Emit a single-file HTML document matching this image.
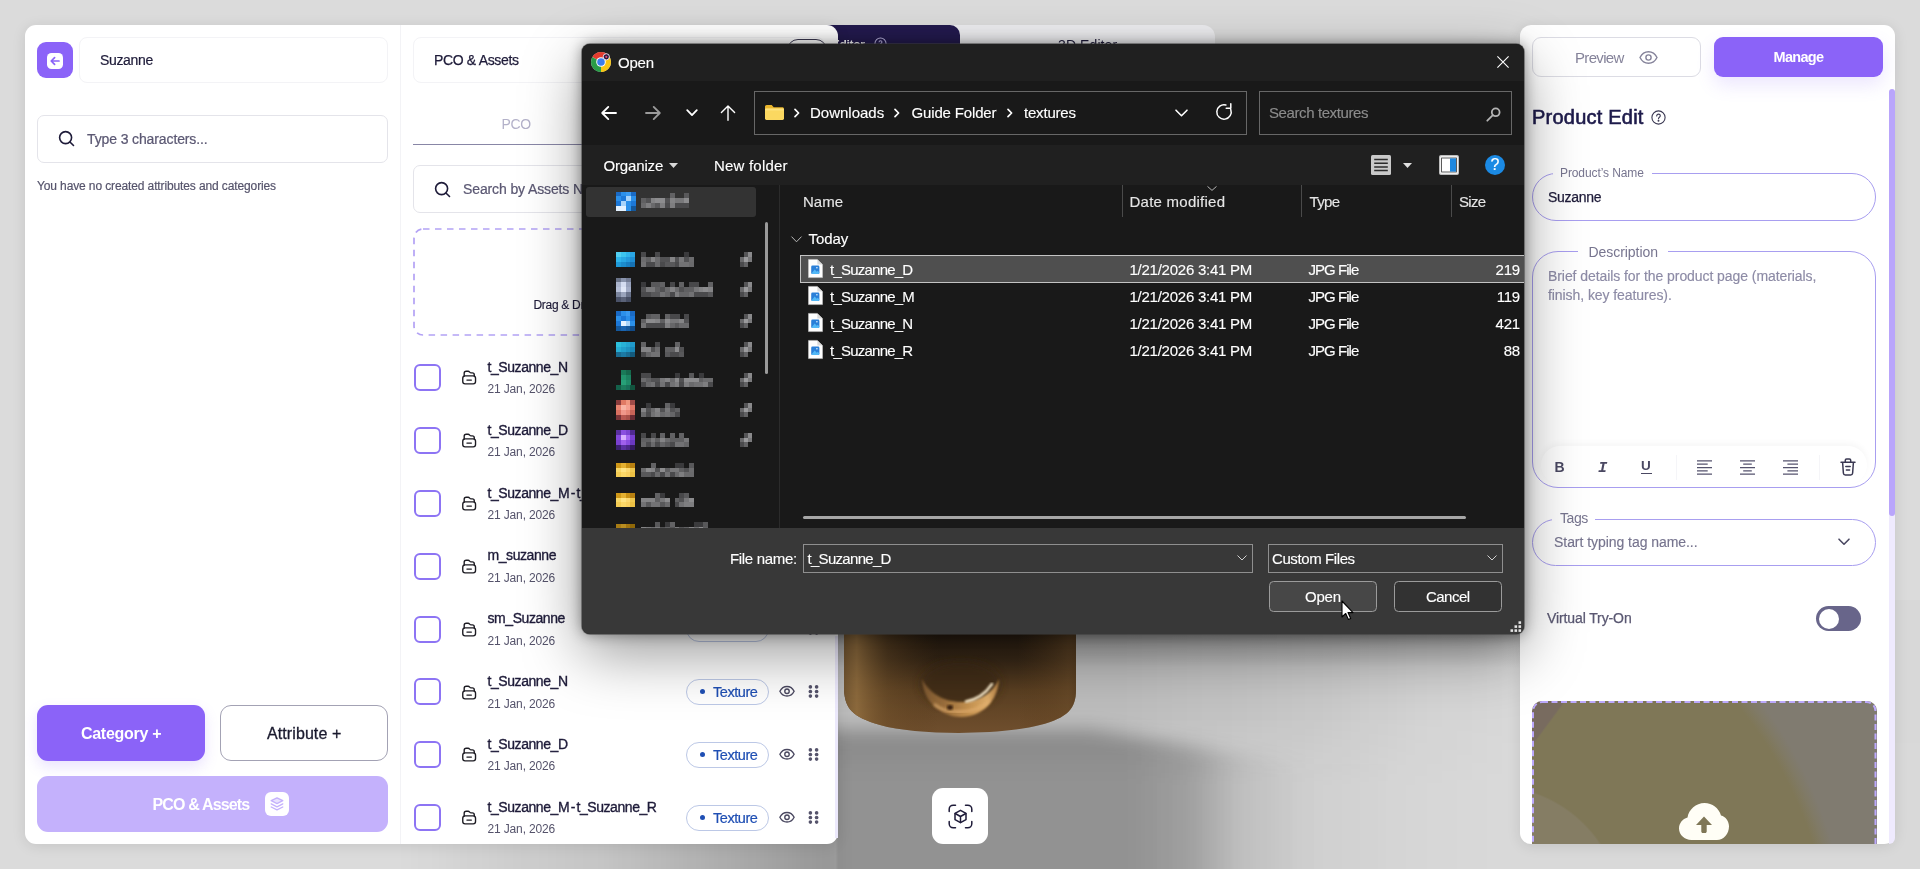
<!DOCTYPE html>
<html lang="en">
<head>
<meta charset="utf-8">
<title>Suzanne - Product Edit</title>
<style>
*{box-sizing:border-box;margin:0;padding:0}
html,body{width:1920px;height:869px;overflow:hidden}
body{position:relative;background:#dcdcdc;font-family:"Liberation Sans",Arial,sans-serif;color:#1e1b39}
.abs{position:absolute}
svg{display:block;overflow:visible}
/* ---------- viewport (3D canvas) ---------- */
#viewport{position:absolute;left:0;top:0;width:1920px;height:869px;overflow:hidden;background:#dbdbdb}
#band{position:absolute;left:0;top:600px;width:1920px;height:269px;
 background:linear-gradient(90deg,rgba(0,0,0,0) 836px,rgba(0,0,0,.135) 838px,rgba(0,0,0,.135) 1120px,rgba(0,0,0,.085) 1300px,rgba(0,0,0,.035) 1420px,rgba(0,0,0,.012) 1510px);
 -webkit-mask-image:linear-gradient(180deg,#000 0,#000 118px,rgba(0,0,0,.55) 185px,rgba(0,0,0,.55) 100%);mask-image:linear-gradient(180deg,#000 0,#000 118px,rgba(0,0,0,.55) 185px,rgba(0,0,0,.55) 100%)}
#under{position:absolute;left:838px;top:634px;width:682px;height:34px;background:linear-gradient(180deg,rgba(0,0,0,.2) 0,rgba(0,0,0,.1) 12px,rgba(0,0,0,0) 100%)}
/* ---------- left panel ---------- */
#left{position:absolute;left:25px;top:25px;width:813px;height:819px;background:#fff;border-radius:11px;
 box-shadow:0 2px 14px rgba(0,0,0,.10);overflow:hidden}
#right{position:absolute;left:1520px;top:25px;width:375px;height:819px;background:#fff;border-radius:11px;
 box-shadow:0 2px 14px rgba(0,0,0,.10);overflow:hidden}
/* ---------- dialog ---------- */
#dlg{position:absolute;left:582px;top:44px;width:942px;height:590px;background:#191919;border-radius:8px;
 box-shadow:0 0 0 1px rgba(60,60,60,.5),0 0 14px rgba(0,0,0,.42),0 20px 60px rgba(0,0,0,.40);overflow:hidden;
 color:#fff;font-size:15px}

/* ---------- left panel content ---------- */
.t{position:absolute;white-space:nowrap;line-height:1}
#back{position:absolute;left:37px;top:42px;width:36px;height:36px;border-radius:9px;background:#8b63f8}
#back i{position:absolute;left:10px;top:10.5px;width:16px;height:16px;border-radius:4.5px;background:#fff}
.box{position:absolute;border:1px solid #ececf0;border-radius:8px;background:#fff}
#cat{position:absolute;left:37px;top:705px;width:168px;height:56px;border-radius:11px;background:#8b63f8;box-shadow:0 6px 14px rgba(139,99,248,.18)}
#attr{position:absolute;left:220px;top:705px;width:168px;height:56px;border-radius:11px;background:#fff;border:1px solid #a3a2b4}
#pco{position:absolute;left:37px;top:776px;width:351px;height:56px;border-radius:11px;background:#c4b1fc}
#pco i{position:absolute;left:228px;top:16px;width:24px;height:24px;border-radius:6px;background:#fff}
.cb{position:absolute;left:414px;width:27px;height:27px;border:2px solid #8d74f4;border-radius:6px;background:#fff}
.fi{position:absolute;left:461.800px;width:14.300px;height:14.800px}
.nm{position:absolute;left:487.5px;font-size:14px;font-weight:400;color:#1e1b39;white-space:nowrap;line-height:1;letter-spacing:-.43px;-webkit-text-stroke:.35px #1e1b39}
.dt{position:absolute;left:487.5px;font-size:12px;color:#55536b;white-space:nowrap;line-height:1;letter-spacing:-.15px}
.pill{position:absolute;left:686px;width:83px;height:26px;border:1px solid #bcc8e6;border-radius:13px;background:#fff;color:#1f4fb4;font-size:14.5px;line-height:24px;padding-left:26px;letter-spacing:-.44px;-webkit-text-stroke:.2px #1f4fb4}
.pill:before{content:"";position:absolute;left:12.5px;top:9.5px;width:5px;height:5px;border-radius:50%;background:#1f4fb4}
.eye{position:absolute;left:779px;width:16px;height:12.500px}
.grip{position:absolute;left:807.700px;width:11px;height:13px}

/* ---------- right panel content ---------- */
.fs{position:absolute;left:1532px;width:344px;border:1px solid #a89ef0;background:#fff}
.lg{position:absolute;background:#fff;white-space:nowrap;line-height:1;color:#77758f}
#toggle{position:absolute;left:1816px;top:606px;width:45px;height:25px;border-radius:12.5px;background:#68658a}
#toggle i{position:absolute;left:2.5px;top:2.5px;width:20px;height:20px;border-radius:50%;background:#fff}
.ic{position:absolute}

/* ---------- dialog content ---------- */
.d{position:absolute;white-space:nowrap;line-height:1;color:#fff;font-size:15px;-webkit-text-stroke:.13px currentColor}
.mz{position:absolute;filter:blur(.75px)}.mz i{position:absolute;width:5.100px;height:5.100px}
.sm{position:absolute;height:12px;filter:blur(1.300px);border-radius:2px;opacity:.9;-webkit-mask-image:linear-gradient(180deg,rgba(0,0,0,.45) 0,#000 30%,#000 100%)}
.pin{position:absolute;left:740px;width:11px;height:11px;background:#909090;filter:blur(1.500px);opacity:.7;clip-path:polygon(45% 0,100% 0,100% 60%,60% 100%,0 100%,0 55%)}
.frow{position:absolute;left:830px;font-size:15px;color:#fff;-webkit-text-stroke:.13px #fff;white-space:nowrap;line-height:1;letter-spacing:-.77px}
.fdate{position:absolute;left:1129.500px;font-size:15px;color:#fff;-webkit-text-stroke:.13px #fff;white-space:nowrap;line-height:1;letter-spacing:-.25px}
.ftype{position:absolute;left:1308.500px;font-size:15px;color:#fff;-webkit-text-stroke:.13px #fff;white-space:nowrap;line-height:1;letter-spacing:-.96px}
.fsize{position:absolute;right:400px;font-size:15px;color:#fff;-webkit-text-stroke:.13px #fff;white-space:nowrap;line-height:1;letter-spacing:-.2px;text-align:right}
.colsep{position:absolute;top:185px;width:1px;height:32px;background:#4a4a4a}
</style>
</head>
<body>
<div id="root" style="position:absolute;left:0;top:0;width:1920px;height:869px;will-change:transform">
<div id="viewport"><div id="band"></div><div id="under"></div><svg class="abs" style="left:0;top:560px" width="1920" height="309" viewBox="0 560 1920 309"><defs><filter id="fsh" x="-10%" y="-30%" width="120%" height="160%"><feGaussianBlur stdDeviation="9"/></filter><linearGradient id="fg" gradientUnits="userSpaceOnUse" x1="400" y1="0" x2="1460" y2="0"><stop offset="0" stop-opacity="0"/><stop offset=".094" stop-opacity=".055"/><stop offset=".189" stop-opacity=".10"/><stop offset=".32" stop-opacity=".225"/><stop offset=".4123" stop-opacity=".32"/><stop offset=".4133" stop-opacity=".28"/><stop offset=".6887" stop-opacity=".28"/><stop offset=".7453" stop-opacity=".22"/><stop offset=".7925" stop-opacity=".078"/><stop offset=".8585" stop-opacity=".004"/><stop offset="1" stop-opacity="0"/></linearGradient></defs><path d="M380 930V744L838 729 1090 729 1300 764H1470V930Z" fill="url(#fg)" filter="url(#fsh)"/></svg></div>
<!-- top tab bar in viewport -->
<div class="abs" style="left:838px;top:25px;width:377px;height:40px;background:#ededf0;border-radius:0 12px 0 0"></div>
<div class="abs" style="left:826px;top:25px;width:134px;height:40px;background:#231a4e;border-radius:0 10px 0 0"></div>
<div class="t" style="left:831.800px;top:38.500px;font-size:12px;color:#fff;font-weight:700;letter-spacing:-.3px">Editor</div>
<svg class="abs" style="left:873.500px;top:37.300px" width="13" height="13" viewBox="0 0 14 14" fill="none" stroke="#bdb6e0" stroke-width="1.100"><circle cx="7" cy="7" r="6"/><path d="M5.400 5.600c0-1 .7-1.600 1.600-1.600s1.600.6 1.600 1.500c0 1.200-1.600 1.300-1.600 2.500"/></svg>
<div class="t" style="left:1058px;top:37.500px;font-size:14px;color:#1e1b39;letter-spacing:.1px">3D Editor</div>
<!-- bronze model -->
<svg class="abs" style="left:838px;top:628px" width="250" height="115" viewBox="838 628 250 115">
 <defs>
  <linearGradient id="bz1" x1="0" y1="0" x2="0" y2="1"><stop offset="0" stop-color="#241a10"/><stop offset=".28" stop-color="#382817"/><stop offset=".55" stop-color="#5b4022"/><stop offset="1" stop-color="#745230"/></linearGradient>
  <linearGradient id="bz2" x1="0" y1="0" x2="1" y2="0"><stop offset="0" stop-color="#6d5230" stop-opacity=".95"/><stop offset=".075" stop-color="#8f6c3e" stop-opacity=".95"/><stop offset=".2" stop-color="#73532c" stop-opacity=".45"/><stop offset=".4" stop-color="#5a3c1c" stop-opacity="0"/><stop offset=".72" stop-color="#5a3c1c" stop-opacity="0"/><stop offset=".92" stop-color="#6c4d2a" stop-opacity=".55"/><stop offset="1" stop-color="#4a3218" stop-opacity=".85"/></linearGradient>
  <radialGradient id="bz3" cx="960" cy="690" r="46" gradientUnits="userSpaceOnUse"><stop offset="0" stop-color="#5b3d1e"/><stop offset=".7" stop-color="#6b4824" stop-opacity=".6"/><stop offset="1" stop-color="#6b4824" stop-opacity="0"/></radialGradient>
  <linearGradient id="bz4" gradientUnits="userSpaceOnUse" x1="922" y1="0" x2="999" y2="0"><stop offset="0" stop-color="#7d5830"/><stop offset=".3" stop-color="#9b6f3c"/><stop offset=".6" stop-color="#c4914f"/><stop offset=".85" stop-color="#e0ae6a"/><stop offset="1" stop-color="#b07c42"/></linearGradient><filter id="bl3"><feGaussianBlur stdDeviation="4"/></filter><filter id="bl1"><feGaussianBlur stdDeviation="1.600"/></filter>
  <filter id="bl2"><feGaussianBlur stdDeviation=".8"/></filter>
  <clipPath id="bzc"><path d="M844 628H1076V690C1076 708 1068 718 1040 725 1004 735 918 736 880 725 852 717 845 708 844 690Z"/></clipPath>
 </defs>
 <g clip-path="url(#bzc)">
  <rect x="838" y="628" width="250" height="115" fill="url(#bz1)"/>
  <rect x="838" y="628" width="250" height="115" fill="url(#bz2)"/>
  <ellipse cx="960.500" cy="684" rx="40" ry="24" fill="#3d2914" filter="url(#bl3)" opacity=".75"/>
  <path d="M922 679C923 704 944 717 961 717 980 717 998 703 999 679 993 693 979 702 961 702 944 702 929 693 922 679Z" fill="url(#bz4)" filter="url(#bl2)"/>
  <path d="M934 704C944 714 975 716 990 700" fill="none" stroke="#e6b272" stroke-width="2.400" filter="url(#bl1)" opacity=".9"/>
  <path d="M966 701.500C977 699.500 986 693 992 684" fill="none" stroke="#fff0d0" stroke-width="2.600" filter="url(#bl2)" stroke-linecap="round"/>
  <ellipse cx="950" cy="707.500" rx="3" ry="2.400" fill="#3a220c" filter="url(#bl2)"/>
  </g>
</svg>
<!-- AR button -->
<div class="abs" style="left:932px;top:788px;width:56px;height:56px;border-radius:11px;background:#fff"></div>
<svg class="abs" style="left:947.500px;top:804px" width="25" height="25" viewBox="0 0 25 25" fill="none" stroke="#1e1b39" stroke-width="1.500" stroke-linecap="round" stroke-linejoin="round"><path d="M1.200 7.500V5.200c0-2.200 1.800-4 4-4h2.300M17.500 1.200h2.300c2.200 0 4 1.800 4 4v2.300M23.800 17.500v2.300c0 2.200-1.800 4-4 4h-2.300M7.500 23.800H5.200c-2.200 0-4-1.800-4-4v-2.300"/><path d="M12.500 6.300l5.500 3.100v6.200l-5.500 3.100-5.500-3.100V9.400z"/><path d="M7.200 9.500l5.300 3 5.300-3M12.500 12.500v6"/></svg>


<!-- ================= LEFT PANEL ================= -->
<div id="left"></div>
<div class="abs" style="left:400px;top:25px;width:1px;height:819px;background:#f3f3f6"></div>
<div class="abs" style="left:834.500px;top:636px;width:3.500px;height:202px;background:#ece9fc"></div>
<div id="back"><i></i><svg class="abs" style="left:10px;top:10.5px" width="16" height="16" viewBox="0 0 16 16" fill="none" stroke="#8b63f8" stroke-width="1.700" stroke-linecap="round" stroke-linejoin="round"><path d="M12 8H4.500M7.600 4.600L4.200 8l3.400 3.400"/></svg></div>
<div class="box" style="left:79px;top:37px;width:309px;height:46px;border-color:#f3f3f6"></div>
<div class="t" style="left:100px;top:52.800px;font-size:14px;letter-spacing:-.35px;-webkit-text-stroke:.2px #1e1b39">Suzanne</div>
<div class="box" style="left:37px;top:115px;width:351px;height:48px;border-color:#e4e4ea;border-radius:7px"></div>
<svg class="abs" style="left:58px;top:130px" width="17" height="17" viewBox="0 0 17 17" fill="none" stroke="#1e1b39" stroke-width="1.600" stroke-linecap="round"><circle cx="7.600" cy="7.600" r="6"/><path d="M12.200 12.200l3.300 3.300"/></svg>
<div class="t" style="left:87px;top:132px;font-size:14px;color:#5b5873;letter-spacing:-.12px;-webkit-text-stroke:.22px #5b5873">Type 3 characters...</div>
<div class="t" style="left:37px;top:180px;font-size:12px;color:#55536b;letter-spacing:-.12px;-webkit-text-stroke:.18px #55536b">You have no created attributes and categories</div>
<div id="cat"></div><div class="t" style="left:81px;top:726px;font-size:16px;font-weight:700;color:#fff;letter-spacing:-.29px">Category +</div>
<div id="attr"></div><div class="t" style="left:267px;top:726px;font-size:16px;color:#1a1a2e;letter-spacing:.09px;-webkit-text-stroke:.3px #1a1a2e">Attribute +</div>
<div id="pco"><i></i><svg class="abs" style="left:232px;top:20px" width="16" height="16" viewBox="0 0 16 16" fill="none" stroke="#c4b1fc" stroke-width="1.300" stroke-linejoin="round" stroke-linecap="round"><path d="M8 1.800L2.200 4.700 8 7.600l5.800-2.900z" fill="#e9e2fe"/><path d="M2.200 7.900L8 10.800l5.800-2.900M2.200 11L8 13.900l5.800-2.900"/></svg></div>
<div class="t" style="left:152.500px;top:796.600px;font-size:16px;font-weight:700;color:#fff;letter-spacing:-.84px">PCO &amp; Assets</div>

<!-- middle column -->
<div class="box" style="left:413px;top:37px;width:412px;height:46px;border-color:#f3f3f6"></div>
<div class="t" style="left:434px;top:52.800px;font-size:14px;letter-spacing:-.34px;-webkit-text-stroke:.25px #1e1b39">PCO &amp; Assets</div>
<div class="abs" style="left:787px;top:39px;width:40px;height:22px;border:1.500px solid #3a3850;border-radius:11px;background:#fff"></div>
<div class="t" style="left:501.500px;top:117px;font-size:14px;color:#b3b1c9;letter-spacing:-.3px">PCO</div>
<div class="abs" style="left:413px;top:144px;width:412px;height:1px;background:#8886a6"></div>
<div class="box" style="left:413px;top:165px;width:412px;height:48px;border-color:#e4e4ea;border-radius:7px"></div>
<svg class="abs" style="left:434px;top:181px" width="17" height="17" viewBox="0 0 17 17" fill="none" stroke="#1e1b39" stroke-width="1.600" stroke-linecap="round"><circle cx="7.600" cy="7.600" r="6"/><path d="M12.200 12.200l3.300 3.300"/></svg>
<div class="t" style="left:463px;top:182px;font-size:14px;color:#5b5873;letter-spacing:-.12px;-webkit-text-stroke:.22px #5b5873">Search by Assets Name</div>
<svg class="abs" style="left:413px;top:228px" width="412" height="108"><rect x="1" y="1" width="410" height="106" rx="9" fill="none" stroke="#b3a2f5" stroke-width="1.700" stroke-dasharray="6.500 5.500"/></svg>
<div class="t" style="left:533.500px;top:299px;font-size:12px;color:#1e1b39;letter-spacing:-.3px;-webkit-text-stroke:.15px #1e1b39">Drag &amp; Drop</div>
<div class="cb" style="top:364.0px"></div><svg class="fi" style="top:370.2px" viewBox="0 0 15 15" fill="none" stroke="#1c1b22" stroke-width="1.450" stroke-linecap="round" stroke-linejoin="round"><path d="M2.300 6V3.200C2.300 2 3.200 1.100 4.400 1.100h2.100c1.500 0 1.600 1.700 3 1.700h1.300c1.200 0 2.100.9 2.100 2.100V6"/><rect x=".8" y="5.900" width="13.400" height="8.400" rx="2.400"/><path d="M5.200 10.300h4.600"/></svg><div class="nm" style="top:359.7px">t_Suzanne_N</div><div class="dt" style="top:383.1px">21 Jan, 2026</div><div class="pill" style="top:364.5px">Texture</div><svg class="eye" style="top:370.9px" viewBox="0 0 18 14" fill="none" stroke="#4a4860" stroke-width="1.550"><path d="M1 7C2.8 3.4 5.7 1.6 9 1.6S15.2 3.4 17 7c-1.8 3.6-4.700 5.400-8 5.400S2.800 10.600 1 7z"/><circle cx="9" cy="7" r="2.500"/></svg><svg class="grip" style="top:370.7px" viewBox="0 0 12 14" fill="#55536b"><circle cx="2.600" cy="2" r="2"/><circle cx="9.400" cy="2" r="2"/><circle cx="2.600" cy="7" r="2"/><circle cx="9.400" cy="7" r="2"/><circle cx="2.600" cy="12" r="2"/><circle cx="9.400" cy="12" r="2"/></svg>
<div class="cb" style="top:426.9px"></div><svg class="fi" style="top:433.1px" viewBox="0 0 15 15" fill="none" stroke="#1c1b22" stroke-width="1.450" stroke-linecap="round" stroke-linejoin="round"><path d="M2.300 6V3.200C2.300 2 3.200 1.100 4.400 1.100h2.100c1.500 0 1.600 1.700 3 1.700h1.300c1.200 0 2.100.9 2.100 2.100V6"/><rect x=".8" y="5.900" width="13.400" height="8.400" rx="2.400"/><path d="M5.200 10.300h4.600"/></svg><div class="nm" style="top:422.6px">t_Suzanne_D</div><div class="dt" style="top:446.0px">21 Jan, 2026</div><div class="pill" style="top:427.4px">Texture</div><svg class="eye" style="top:433.8px" viewBox="0 0 18 14" fill="none" stroke="#4a4860" stroke-width="1.550"><path d="M1 7C2.8 3.4 5.7 1.6 9 1.6S15.2 3.4 17 7c-1.8 3.6-4.700 5.400-8 5.400S2.800 10.600 1 7z"/><circle cx="9" cy="7" r="2.500"/></svg><svg class="grip" style="top:433.6px" viewBox="0 0 12 14" fill="#55536b"><circle cx="2.600" cy="2" r="2"/><circle cx="9.400" cy="2" r="2"/><circle cx="2.600" cy="7" r="2"/><circle cx="9.400" cy="7" r="2"/><circle cx="2.600" cy="12" r="2"/><circle cx="9.400" cy="12" r="2"/></svg>
<div class="cb" style="top:489.8px"></div><svg class="fi" style="top:496.0px" viewBox="0 0 15 15" fill="none" stroke="#1c1b22" stroke-width="1.450" stroke-linecap="round" stroke-linejoin="round"><path d="M2.300 6V3.200C2.300 2 3.200 1.100 4.400 1.100h2.100c1.500 0 1.600 1.700 3 1.700h1.300c1.200 0 2.100.9 2.100 2.100V6"/><rect x=".8" y="5.900" width="13.400" height="8.400" rx="2.400"/><path d="M5.200 10.300h4.600"/></svg><div class="nm" style="top:485.5px">t_Suzanne_M<span style="letter-spacing:1.100px;margin-left:1.500px">-</span>t_Suzanne_R</div><div class="dt" style="top:508.9px">21 Jan, 2026</div><div class="pill" style="top:490.3px">Texture</div><svg class="eye" style="top:496.7px" viewBox="0 0 18 14" fill="none" stroke="#4a4860" stroke-width="1.550"><path d="M1 7C2.8 3.4 5.7 1.6 9 1.6S15.2 3.4 17 7c-1.8 3.6-4.700 5.400-8 5.400S2.800 10.600 1 7z"/><circle cx="9" cy="7" r="2.500"/></svg><svg class="grip" style="top:496.5px" viewBox="0 0 12 14" fill="#55536b"><circle cx="2.600" cy="2" r="2"/><circle cx="9.400" cy="2" r="2"/><circle cx="2.600" cy="7" r="2"/><circle cx="9.400" cy="7" r="2"/><circle cx="2.600" cy="12" r="2"/><circle cx="9.400" cy="12" r="2"/></svg>
<div class="cb" style="top:552.6px"></div><svg class="fi" style="top:558.8px" viewBox="0 0 15 15" fill="none" stroke="#1c1b22" stroke-width="1.450" stroke-linecap="round" stroke-linejoin="round"><path d="M2.300 6V3.200C2.300 2 3.200 1.100 4.400 1.100h2.100c1.500 0 1.600 1.700 3 1.700h1.300c1.200 0 2.100.9 2.100 2.100V6"/><rect x=".8" y="5.900" width="13.400" height="8.400" rx="2.400"/><path d="M5.200 10.300h4.600"/></svg><div class="nm" style="top:548.3px">m_suzanne</div><div class="dt" style="top:571.7px">21 Jan, 2026</div><div class="pill" style="top:553.1px">Texture</div><svg class="eye" style="top:559.5px" viewBox="0 0 18 14" fill="none" stroke="#4a4860" stroke-width="1.550"><path d="M1 7C2.8 3.4 5.7 1.6 9 1.6S15.2 3.4 17 7c-1.8 3.6-4.700 5.400-8 5.400S2.800 10.600 1 7z"/><circle cx="9" cy="7" r="2.500"/></svg><svg class="grip" style="top:559.3px" viewBox="0 0 12 14" fill="#55536b"><circle cx="2.600" cy="2" r="2"/><circle cx="9.400" cy="2" r="2"/><circle cx="2.600" cy="7" r="2"/><circle cx="9.400" cy="7" r="2"/><circle cx="2.600" cy="12" r="2"/><circle cx="9.400" cy="12" r="2"/></svg>
<div class="cb" style="top:615.5px"></div><svg class="fi" style="top:621.7px" viewBox="0 0 15 15" fill="none" stroke="#1c1b22" stroke-width="1.450" stroke-linecap="round" stroke-linejoin="round"><path d="M2.300 6V3.200C2.300 2 3.200 1.100 4.400 1.100h2.100c1.500 0 1.600 1.700 3 1.700h1.300c1.200 0 2.100.9 2.100 2.100V6"/><rect x=".8" y="5.900" width="13.400" height="8.400" rx="2.400"/><path d="M5.200 10.300h4.600"/></svg><div class="nm" style="top:611.2px">sm_Suzanne</div><div class="dt" style="top:634.6px">21 Jan, 2026</div><div class="pill" style="top:616.0px">Texture</div><svg class="eye" style="top:622.4px" viewBox="0 0 18 14" fill="none" stroke="#4a4860" stroke-width="1.550"><path d="M1 7C2.8 3.4 5.7 1.6 9 1.6S15.2 3.4 17 7c-1.8 3.6-4.700 5.400-8 5.400S2.800 10.600 1 7z"/><circle cx="9" cy="7" r="2.500"/></svg><svg class="grip" style="top:622.2px" viewBox="0 0 12 14" fill="#55536b"><circle cx="2.600" cy="2" r="2"/><circle cx="9.400" cy="2" r="2"/><circle cx="2.600" cy="7" r="2"/><circle cx="9.400" cy="7" r="2"/><circle cx="2.600" cy="12" r="2"/><circle cx="9.400" cy="12" r="2"/></svg>
<div class="cb" style="top:678.4px"></div><svg class="fi" style="top:684.6px" viewBox="0 0 15 15" fill="none" stroke="#1c1b22" stroke-width="1.450" stroke-linecap="round" stroke-linejoin="round"><path d="M2.300 6V3.200C2.300 2 3.200 1.100 4.400 1.100h2.100c1.500 0 1.600 1.700 3 1.700h1.300c1.200 0 2.100.9 2.100 2.100V6"/><rect x=".8" y="5.900" width="13.400" height="8.400" rx="2.400"/><path d="M5.200 10.300h4.600"/></svg><div class="nm" style="top:674.1px">t_Suzanne_N</div><div class="dt" style="top:697.5px">21 Jan, 2026</div><div class="pill" style="top:678.9px">Texture</div><svg class="eye" style="top:685.3px" viewBox="0 0 18 14" fill="none" stroke="#4a4860" stroke-width="1.550"><path d="M1 7C2.8 3.4 5.7 1.6 9 1.6S15.2 3.4 17 7c-1.8 3.6-4.700 5.400-8 5.400S2.800 10.600 1 7z"/><circle cx="9" cy="7" r="2.500"/></svg><svg class="grip" style="top:685.1px" viewBox="0 0 12 14" fill="#55536b"><circle cx="2.600" cy="2" r="2"/><circle cx="9.400" cy="2" r="2"/><circle cx="2.600" cy="7" r="2"/><circle cx="9.400" cy="7" r="2"/><circle cx="2.600" cy="12" r="2"/><circle cx="9.400" cy="12" r="2"/></svg>
<div class="cb" style="top:741.2px"></div><svg class="fi" style="top:747.4px" viewBox="0 0 15 15" fill="none" stroke="#1c1b22" stroke-width="1.450" stroke-linecap="round" stroke-linejoin="round"><path d="M2.300 6V3.200C2.300 2 3.200 1.100 4.400 1.100h2.100c1.500 0 1.600 1.700 3 1.700h1.300c1.200 0 2.100.9 2.100 2.100V6"/><rect x=".8" y="5.900" width="13.400" height="8.400" rx="2.400"/><path d="M5.200 10.300h4.600"/></svg><div class="nm" style="top:736.9px">t_Suzanne_D</div><div class="dt" style="top:760.3px">21 Jan, 2026</div><div class="pill" style="top:741.7px">Texture</div><svg class="eye" style="top:748.1px" viewBox="0 0 18 14" fill="none" stroke="#4a4860" stroke-width="1.550"><path d="M1 7C2.8 3.4 5.7 1.6 9 1.6S15.2 3.4 17 7c-1.8 3.6-4.700 5.400-8 5.400S2.800 10.600 1 7z"/><circle cx="9" cy="7" r="2.500"/></svg><svg class="grip" style="top:747.9px" viewBox="0 0 12 14" fill="#55536b"><circle cx="2.600" cy="2" r="2"/><circle cx="9.400" cy="2" r="2"/><circle cx="2.600" cy="7" r="2"/><circle cx="9.400" cy="7" r="2"/><circle cx="2.600" cy="12" r="2"/><circle cx="9.400" cy="12" r="2"/></svg>
<div class="cb" style="top:804.1px"></div><svg class="fi" style="top:810.3px" viewBox="0 0 15 15" fill="none" stroke="#1c1b22" stroke-width="1.450" stroke-linecap="round" stroke-linejoin="round"><path d="M2.300 6V3.200C2.300 2 3.200 1.100 4.400 1.100h2.100c1.500 0 1.600 1.700 3 1.700h1.300c1.200 0 2.100.9 2.100 2.100V6"/><rect x=".8" y="5.900" width="13.400" height="8.400" rx="2.400"/><path d="M5.200 10.300h4.600"/></svg><div class="nm" style="top:799.8px">t_Suzanne_M<span style="letter-spacing:1.100px;margin-left:1.500px">-</span>t_Suzanne_R</div><div class="dt" style="top:823.2px">21 Jan, 2026</div><div class="pill" style="top:804.6px">Texture</div><svg class="eye" style="top:811.0px" viewBox="0 0 18 14" fill="none" stroke="#4a4860" stroke-width="1.550"><path d="M1 7C2.8 3.4 5.7 1.6 9 1.6S15.2 3.4 17 7c-1.8 3.6-4.700 5.400-8 5.400S2.800 10.600 1 7z"/><circle cx="9" cy="7" r="2.500"/></svg><svg class="grip" style="top:810.8px" viewBox="0 0 12 14" fill="#55536b"><circle cx="2.600" cy="2" r="2"/><circle cx="9.400" cy="2" r="2"/><circle cx="2.600" cy="7" r="2"/><circle cx="9.400" cy="7" r="2"/><circle cx="2.600" cy="12" r="2"/><circle cx="9.400" cy="12" r="2"/></svg>

<!-- ================= RIGHT PANEL ================= -->
<div id="right"></div>
<div class="abs" style="left:1888.500px;top:92px;width:6px;height:752px;background:#efeafe;border-radius:0 0 10px 0"></div>
<div class="abs" style="left:1888.500px;top:89px;width:6px;height:427px;background:#b9a5fb;border-radius:3px 3px 3px 3px"></div>
<div class="box" style="left:1532px;top:37px;width:169px;height:40px;border-color:#dcdce4;border-radius:9px"></div>
<div class="t" style="left:1575px;top:49.500px;font-size:15px;color:#85839a;letter-spacing:-.66px">Preview</div>
<svg class="abs" style="left:1639px;top:49.500px" width="19" height="15" viewBox="0 0 19 15" fill="none" stroke="#85839a" stroke-width="1.400"><path d="M1 7.500C2.900 3.700 6 1.700 9.500 1.700s6.600 2 8.500 5.800c-1.900 3.800-5 5.800-8.500 5.800S2.900 11.300 1 7.500z"/><circle cx="9.500" cy="7.500" r="2.600"/></svg>
<div class="abs" style="left:1714px;top:37px;width:169px;height:40px;border-radius:9px;background:#8b63f8;box-shadow:0 8px 18px rgba(139,99,248,.16)"></div>
<div class="t" style="left:1773.500px;top:49.500px;font-size:14.500px;font-weight:700;color:#fff;letter-spacing:-.68px">Manage</div>
<div class="t" style="left:1532px;top:106.500px;font-size:20px;font-weight:400;color:#1e1b4b;letter-spacing:.22px;-webkit-text-stroke:.62px #1e1b4b">Product Edit</div>
<svg class="abs" style="left:1650.500px;top:109.500px" width="15" height="15" viewBox="0 0 15 15" fill="none" stroke="#3a3852" stroke-width="1.100" stroke-linecap="round"><circle cx="7.500" cy="7.500" r="6.600"/><path d="M5.700 5.900c0-1.100.8-1.800 1.800-1.800s1.800.7 1.800 1.700c0 1.400-1.800 1.500-1.800 2.900"/><circle cx="7.500" cy="10.800" r=".4" fill="#3a3852"/></svg>

<div class="fs" style="top:173px;height:48px;border-radius:24px"></div>
<div class="lg" style="left:1553px;top:167px;padding:0 8px 0 7px;font-size:12px;letter-spacing:-.1px">Product’s Name</div>
<div class="t" style="left:1548px;top:190px;font-size:14px;letter-spacing:-.3px;-webkit-text-stroke:.25px #1e1b39">Suzanne</div>

<div class="fs" style="top:251px;height:237px;border-radius:26px"></div>
<div class="lg" style="left:1578px;top:245px;padding:0 10px 0 10.500px;font-size:14px;letter-spacing:-.05px">Description</div>
<div class="t" style="left:1548px;top:267.200px;font-size:14px;color:#8d8ba6;letter-spacing:-.07px;line-height:19px;-webkit-text-stroke:.15px #8d8ba6">Brief details for the product page (materials,<br>finish, key features).</div>
<div class="abs" style="left:1541px;top:446px;width:326px;height:38px;border-radius:19px;background:#fff;box-shadow:0 -3px 6px rgba(0,0,0,.035)"></div>
<div class="t" style="left:1554.500px;top:459.600px;font-size:14px;font-weight:700;color:#4a4862">B</div>
<div class="t" style="left:1598px;top:461px;font-size:15.500px;font-weight:700;font-style:italic;color:#4a4862;font-family:'Liberation Mono',monospace">I</div>
<div class="t" style="left:1641px;top:459.300px;font-size:13.500px;font-weight:700;color:#4a4862">U</div>
<div class="abs" style="left:1641px;top:472.500px;width:10.500px;height:1.400px;background:#4a4862"></div>
<div class="abs" style="left:1675.500px;top:455px;width:1px;height:25px;background:#f5f5f8"></div>
<div class="abs" style="left:1819px;top:455px;width:1px;height:25px;background:#f5f5f8"></div>
<svg class="abs" style="left:1696.500px;top:459.500px" width="15" height="15" viewBox="0 0 15 15" stroke="#55536e" stroke-width="1.250"><path d="M0 .9h15M0 4.200h10.700M0 7.500h15M0 10.800h10.700M0 14.100h15"/></svg>
<svg class="abs" style="left:1739.500px;top:459.500px" width="15" height="15" viewBox="0 0 15 15" stroke="#55536e" stroke-width="1.250"><path d="M0 .9h15M3.200 4.200h8.600M0 7.500h15M3.200 10.800h8.600M0 14.100h15"/></svg>
<svg class="abs" style="left:1782.500px;top:459.500px" width="15" height="15" viewBox="0 0 15 15" stroke="#55536e" stroke-width="1.250"><path d="M0 .9h15M4.400 4.200h10.600M0 7.500h15M4.400 10.800h10.600M0 14.100h15"/></svg>
<svg class="abs" style="left:1840px;top:457.500px" width="16" height="18" viewBox="0 0 16 18" fill="none" stroke="#3a3852" stroke-width="1.500" stroke-linecap="round" stroke-linejoin="round"><path d="M1 4.200h14M5.300 4V2.300c0-.8.600-1.300 1.300-1.300h2.800c.7 0 1.300.5 1.300 1.300V4M2.600 4.500l.8 10.700c.1 1 .9 1.800 1.900 1.800h5.400c1 0 1.800-.8 1.900-1.800l.8-10.700M5.800 8.600h4.400M6.400 11.900h3.200"/></svg>

<div class="fs" style="top:518.500px;height:47px;border-radius:23.500px"></div>
<div class="lg" style="left:1552px;top:511px;padding:0 7px 0 8px;font-size:14px;letter-spacing:-.4px">Tags</div>
<div class="t" style="left:1554px;top:535px;font-size:14px;color:#77758f;letter-spacing:-.05px;-webkit-text-stroke:.15px #77758f">Start typing tag name...</div>
<svg class="abs" style="left:1838px;top:538px" width="12" height="8" viewBox="0 0 12 8" fill="none" stroke="#4a4862" stroke-width="1.600" stroke-linecap="round" stroke-linejoin="round"><path d="M1 1.200l5 5 5-5"/></svg>
<div class="t" style="left:1547px;top:611px;font-size:14px;color:#5b5973;letter-spacing:-.11px;-webkit-text-stroke:.25px #5b5973">Virtual Try-On</div>
<div id="toggle"><i></i></div>

<div class="abs" style="left:1532px;top:701px;width:344.500px;height:143px;border-radius:10px 10px 0 0;overflow:hidden;
 background:
  linear-gradient(126.500deg,#786b5f 0,#786b5f 25.500px,rgba(120,107,95,0) 27.500px),
  radial-gradient(circle 131px at -40px 215px,#857d64 0%,#857d64 98.500%,rgba(133,125,100,0) 100%),
  radial-gradient(ellipse 330px 440px at 10px 300px,#7f7757 0%,#7f7757 89.500%,#807a66 92.500%,#807b70 95%,#807b70 100%)">
 <svg class="abs" style="left:0;top:0" width="344.500" height="160"><rect x="1" y="1" width="342.500" height="170" rx="9" fill="none" stroke="#bca9fc" stroke-width="2" stroke-dasharray="6 3.500"/></svg>
</div>
<svg class="abs" style="left:1679px;top:802.500px" width="50" height="37" viewBox="0 0 50 37"><path fill="#fffef6" d="M12.500 37C5.600 37 0 32 0 25.600c0-5.200 3.500-9.500 8.500-11C9.800 6.400 16.900 0 25.500 0c7.800 0 14.400 5.200 16.500 12.400 4.700 1.300 8 5.600 8 10.900C50 31 44.500 37 38 37z"/><path fill="#7f7757" d="M25 13.500l-8 8.400h5.300v6.600c0 .9.700 1.500 1.500 1.500h2.400c.8 0 1.500-.6 1.500-1.500v-6.600H33z"/></svg>

<!-- ================= FILE OPEN DIALOG ================= -->
<div id="dlg">
 <div class="abs" style="left:0;top:0;width:942px;height:37px;background:#202020"></div>
 <div class="abs" style="left:0;top:101px;width:942px;height:40px;background:#202020"></div>
 <div class="abs" style="left:0;top:484px;width:942px;height:106px;background:#383838"></div>
</div>
<!-- chrome logo -->
<svg class="abs" style="left:591px;top:52px" width="20" height="20" viewBox="0 0 20 20"><circle cx="10" cy="10" r="10" fill="#fff"/><path d="M10 10L1.340 5A10 10 0 0 1 18.660 5z" fill="#e33b2e"/><path d="M10 10L18.660 5A10 10 0 0 1 10 20z" fill="#f7c514"/><path d="M10 10L10 20A10 10 0 0 1 1.340 5z" fill="#2a9c48"/><circle cx="10" cy="10" r="4.800" fill="#fff"/><circle cx="10" cy="10" r="3.800" fill="#3b7ded"/><circle cx="15.300" cy="4.800" r="3.100" fill="#2a1b3d" stroke="#f2e9ff" stroke-width=".9"/><circle cx="15.300" cy="4.800" r="1.100" fill="#e8487a"/></svg>
<div class="d" style="left:618px;top:54.700px;letter-spacing:-.2px">Open</div>
<svg class="abs" style="left:1497px;top:56px" width="12" height="12" viewBox="0 0 12 12" stroke="#fff" stroke-width="1.100"><path d="M.4.400l11.200 11.200M11.600.4L.4 11.600"/></svg>

<!-- nav row -->
<svg class="abs" style="left:601px;top:105px" width="16" height="16" viewBox="0 0 16 16" fill="none" stroke="#fff" stroke-width="1.850" stroke-linecap="round" stroke-linejoin="round"><path d="M15 8H1.500M7.300 1.900L1.200 8l6.100 6.100"/></svg>
<svg class="abs" style="left:645px;top:105px" width="16" height="16" viewBox="0 0 16 16" fill="none" stroke="#9b9b9b" stroke-width="1.850" stroke-linecap="round" stroke-linejoin="round"><path d="M1 8h13.500M8.700 1.900L14.800 8l-6.100 6.100"/></svg>
<svg class="abs" style="left:685.500px;top:109px" width="12" height="8" viewBox="0 0 12 8" fill="none" stroke="#fff" stroke-width="1.800" stroke-linecap="round" stroke-linejoin="round"><path d="M1.200 1.200l4.800 4.900 4.800-4.900"/></svg>
<svg class="abs" style="left:720px;top:105px" width="16" height="16" viewBox="0 0 16 16" fill="none" stroke="#fff" stroke-width="1.400" stroke-linecap="round" stroke-linejoin="round"><path d="M8 15.200V1.200M1.400 7.600L8 1l6.600 6.600"/></svg>
<div class="abs" style="left:754px;top:91px;width:493px;height:44px;border:1px solid #676767"></div>
<svg class="abs" style="left:765px;top:104.500px" width="19" height="15" viewBox="0 0 19 15"><path d="M0 1.800C0 .8.700 0 1.700 0h5l2 2.200h8.600c1 0 1.700.7 1.700 1.700V5H0z" fill="#e9b52c"/><rect x="0" y="3.600" width="19" height="11.400" rx="1.400" fill="#fbd860"/><rect x="0" y="3.600" width="19" height="2" rx="1" fill="#ffe58a" opacity=".7"/></svg>
<svg class="abs" style="left:794px;top:108px" width="6" height="10" viewBox="0 0 6 10" fill="none" stroke="#fff" stroke-width="1.700" stroke-linecap="round" stroke-linejoin="round"><path d="M1 1.400L4.600 5 1 8.600"/></svg>
<div class="d" style="left:810px;top:104.500px;letter-spacing:0">Downloads</div>
<svg class="abs" style="left:894px;top:108px" width="6" height="10" viewBox="0 0 6 10" fill="none" stroke="#fff" stroke-width="1.700" stroke-linecap="round" stroke-linejoin="round"><path d="M1 1.400L4.600 5 1 8.600"/></svg>
<div class="d" style="left:911.500px;top:104.500px;letter-spacing:-.15px">Guide Folder</div>
<svg class="abs" style="left:1007px;top:108px" width="6" height="10" viewBox="0 0 6 10" fill="none" stroke="#fff" stroke-width="1.700" stroke-linecap="round" stroke-linejoin="round"><path d="M1 1.400L4.600 5 1 8.600"/></svg>
<div class="d" style="left:1024px;top:104.500px;letter-spacing:-.2px">textures</div>
<svg class="abs" style="left:1174.500px;top:108.500px" width="13" height="8" viewBox="0 0 13 8" fill="none" stroke="#fff" stroke-width="1.600" stroke-linecap="round" stroke-linejoin="round"><path d="M1 1.200l5.500 5.500L12 1.200"/></svg>
<svg class="abs" style="left:1216px;top:104.100px" width="16" height="16" viewBox="0 0 16 16" fill="none" stroke="#fff" stroke-width="1.500" stroke-linecap="round" stroke-linejoin="round"><path d="M9.860 1.050A7.200 7.200 0 1 0 14.770 5.540"/><path d="M10.200 4.300H14.800V-.2"/></svg>
<div class="abs" style="left:1259px;top:91px;width:253px;height:44px;border:1px solid #676767"></div>
<div class="d" style="left:1269px;top:105px;color:#8c8c8c;letter-spacing:-.4px">Search textures</div>
<svg class="abs" style="left:1486px;top:107px" width="15" height="15" viewBox="0 0 15 15" fill="none" stroke="#b4b4b4" stroke-width="1.800" stroke-linecap="round"><circle cx="9.700" cy="5.300" r="3.900"/><path d="M6.800 8.200L1.300 13.700"/></svg>

<!-- toolbar -->
<div class="d" style="left:603.500px;top:157.500px;letter-spacing:-.15px">Organize</div>
<svg class="abs" style="left:669px;top:162.500px" width="9" height="5" viewBox="0 0 9 5"><path d="M0 0h9L4.500 5z" fill="#d8d8d8"/></svg>
<div class="d" style="left:714px;top:157.500px;letter-spacing:.2px">New folder</div>
<svg class="abs" style="left:1371px;top:155px" width="20" height="20" viewBox="0 0 20 20"><rect width="20" height="20" rx="1.500" fill="#c9c9c9"/><path d="M3.200 4.500h13.600M3.200 8.200h13.600M3.200 11.900h13.600M3.200 15.600h13.600" stroke="#2b2b2b" stroke-width="1.500"/></svg>
<svg class="abs" style="left:1403px;top:162.500px" width="9" height="5" viewBox="0 0 9 5"><path d="M0 0h9L4.500 5z" fill="#e0e0e0"/></svg>
<svg class="abs" style="left:1439px;top:155px" width="20" height="20" viewBox="0 0 20 20"><rect x=".6" y=".6" width="18.800" height="18.800" rx="1.500" fill="#fff" stroke="#bdbdbd" stroke-width="1.200"/><rect x="2.600" y="3" width="14.800" height="14" fill="#fff" stroke="#333" stroke-width=".8"/><rect x="11" y="3.400" width="6" height="13.200" fill="#1e88e0"/></svg>
<svg class="abs" style="left:1485px;top:155px" width="20" height="20" viewBox="0 0 20 20"><circle cx="10" cy="10" r="10" fill="#1b8ae4"/></svg>
<div class="d" style="left:1490.500px;top:157px;font-size:16px;font-weight:400">?</div>

<!-- sidebar -->
<div class="abs" style="left:0;top:0;width:1920px;height:528px;overflow:hidden;pointer-events:none">
<div class="abs" style="left:586px;top:187px;width:170px;height:30px;background:#333;border-radius:3px;filter:blur(.6px)"></div>
<div class="mz" style="left:616.0px;top:191.6px"><i style="left:0.0px;top:0.0px;background:#1a6ac4"></i><i style="left:4.9px;top:0.0px;background:#2b90ea"></i><i style="left:9.8px;top:0.0px;background:#3a9af0"></i><i style="left:14.7px;top:0.0px;background:#1a6ac4"></i><i style="left:0.0px;top:4.9px;background:#2b90ea"></i><i style="left:4.9px;top:4.9px;background:#1c78d8"></i><i style="left:9.8px;top:4.9px;background:#a8d4fa"></i><i style="left:14.7px;top:4.9px;background:#2b90ea"></i><i style="left:0.0px;top:9.8px;background:#1c78d8"></i><i style="left:4.9px;top:9.8px;background:#a8d4fa"></i><i style="left:9.8px;top:9.8px;background:#2b90ea"></i><i style="left:14.7px;top:9.8px;background:#1c78d8"></i><i style="left:0.0px;top:14.7px;background:#e4f2ff"></i><i style="left:4.9px;top:14.7px;background:#e4f2ff"></i><i style="left:9.8px;top:14.7px;background:#2b90ea"></i><i style="left:14.7px;top:14.7px;background:#14589c"></i></div><div class="mz" style="left:641.0px;top:193.3px"><i style="left:28.8px;top:0.0px;background:rgba(98,98,100,1.00)"></i><i style="left:43.2px;top:0.0px;background:rgba(88,88,90,1.00)"></i><i style="left:0.0px;top:4.8px;background:rgba(96,96,98,1.00)"></i><i style="left:4.8px;top:4.8px;background:rgba(82,82,84,1.00)"></i><i style="left:9.6px;top:4.8px;background:rgba(132,132,134,1.00)"></i><i style="left:14.4px;top:4.8px;background:rgba(140,140,142,1.00)"></i><i style="left:19.2px;top:4.8px;background:rgba(140,140,142,1.00)"></i><i style="left:24.0px;top:4.8px;background:rgba(82,82,84,1.00)"></i><i style="left:28.8px;top:4.8px;background:rgba(132,132,134,1.00)"></i><i style="left:33.6px;top:4.8px;background:rgba(120,120,122,1.00)"></i><i style="left:38.4px;top:4.8px;background:rgba(120,120,122,1.00)"></i><i style="left:43.2px;top:4.8px;background:rgba(140,140,142,1.00)"></i><i style="left:0.0px;top:9.6px;background:rgba(106,106,108,1.00)"></i><i style="left:4.8px;top:9.6px;background:rgba(126,126,128,1.00)"></i><i style="left:9.6px;top:9.6px;background:rgba(106,106,108,1.00)"></i><i style="left:14.4px;top:9.6px;background:rgba(88,88,90,1.00)"></i><i style="left:19.2px;top:9.6px;background:rgba(126,126,128,1.00)"></i><i style="left:24.0px;top:9.6px;background:rgba(74,74,76,1.00)"></i><i style="left:28.8px;top:9.6px;background:rgba(126,126,128,1.00)"></i><i style="left:33.6px;top:9.6px;background:rgba(74,74,76,1.00)"></i><i style="left:38.4px;top:9.6px;background:rgba(74,74,76,1.00)"></i><i style="left:43.2px;top:9.6px;background:rgba(74,74,76,1.00)"></i></div>
<div class="mz" style="left:616.0px;top:252.3px"><i style="left:0.0px;top:0.0px;background:#52d0f2"></i><i style="left:4.8px;top:0.0px;background:#3cc4ee"></i><i style="left:9.6px;top:0.0px;background:#30b4ea"></i><i style="left:14.4px;top:0.0px;background:#2aa6e4"></i><i style="left:0.0px;top:4.8px;background:#2fb6ec"></i><i style="left:4.8px;top:4.8px;background:#29a8e4"></i><i style="left:9.6px;top:4.8px;background:#249adc"></i><i style="left:14.4px;top:4.8px;background:#1f8ed4"></i><i style="left:0.0px;top:9.6px;background:#1f9ad8"></i><i style="left:4.8px;top:9.6px;background:#1c8ccc"></i><i style="left:9.6px;top:9.6px;background:#187ec0"></i><i style="left:14.4px;top:9.6px;background:#1672b4"></i></div><div class="mz" style="left:641.0px;top:252.3px"><i style="left:0.0px;top:0.0px;background:rgba(72,72,74,1.00)"></i><i style="left:14.4px;top:0.0px;background:rgba(72,72,74,1.00)"></i><i style="left:43.2px;top:0.0px;background:rgba(58,58,60,1.00)"></i><i style="left:0.0px;top:4.8px;background:rgba(108,108,110,1.00)"></i><i style="left:4.8px;top:4.8px;background:rgba(96,96,98,1.00)"></i><i style="left:9.6px;top:4.8px;background:rgba(132,132,134,1.00)"></i><i style="left:14.4px;top:4.8px;background:rgba(108,108,110,1.00)"></i><i style="left:19.2px;top:4.8px;background:rgba(82,82,84,1.00)"></i><i style="left:24.0px;top:4.8px;background:rgba(82,82,84,1.00)"></i><i style="left:28.8px;top:4.8px;background:rgba(132,132,134,1.00)"></i><i style="left:33.6px;top:4.8px;background:rgba(82,82,84,1.00)"></i><i style="left:38.4px;top:4.8px;background:rgba(120,120,122,1.00)"></i><i style="left:43.2px;top:4.8px;background:rgba(82,82,84,1.00)"></i><i style="left:48.0px;top:4.8px;background:rgba(108,108,110,1.00)"></i><i style="left:0.0px;top:9.6px;background:rgba(114,114,116,1.00)"></i><i style="left:4.8px;top:9.6px;background:rgba(74,74,76,1.00)"></i><i style="left:9.6px;top:9.6px;background:rgba(74,74,76,1.00)"></i><i style="left:14.4px;top:9.6px;background:rgba(106,106,108,1.00)"></i><i style="left:19.2px;top:9.6px;background:rgba(74,74,76,1.00)"></i><i style="left:24.0px;top:9.6px;background:rgba(88,88,90,1.00)"></i><i style="left:28.8px;top:9.6px;background:rgba(88,88,90,1.00)"></i><i style="left:33.6px;top:9.6px;background:rgba(74,74,76,1.00)"></i><i style="left:38.4px;top:9.6px;background:rgba(114,114,116,1.00)"></i><i style="left:43.2px;top:9.6px;background:rgba(114,114,116,1.00)"></i><i style="left:48.0px;top:9.6px;background:rgba(106,106,108,1.00)"></i></div><div class="mz" style="left:739.500px;top:252.3px"><i style="left:4.0px;top:0.0px;width:4.300px;height:4.800px;background:rgba(85,85,87,1.00)"></i><i style="left:8.0px;top:0.0px;width:4.300px;height:4.800px;background:rgba(138,138,140,1.00)"></i><i style="left:0.0px;top:4.8px;width:4.300px;height:4.800px;background:rgba(106,106,108,1.00)"></i><i style="left:4.0px;top:4.8px;width:4.300px;height:4.800px;background:rgba(154,154,156,1.00)"></i><i style="left:8.0px;top:4.8px;width:4.300px;height:4.800px;background:rgba(122,122,124,1.00)"></i><i style="left:0.0px;top:9.6px;width:4.300px;height:4.800px;background:rgba(74,74,76,1.00)"></i><i style="left:4.0px;top:9.6px;width:4.300px;height:4.800px;background:rgba(98,98,100,1.00)"></i></div>
<div class="mz" style="left:616.0px;top:277.5px"><i style="left:0.0px;top:0.0px;background:#6a7388"></i><i style="left:4.8px;top:0.0px;background:#8a94ac"></i><i style="left:9.6px;top:0.0px;background:#737c94"></i><i style="left:0.0px;top:4.8px;background:#aab4cc"></i><i style="left:4.8px;top:4.8px;background:#d4dcf0"></i><i style="left:9.6px;top:4.8px;background:#98a2bc"></i><i style="left:0.0px;top:9.6px;background:#b4bed6"></i><i style="left:4.8px;top:9.6px;background:#dfe6f6"></i><i style="left:9.6px;top:9.6px;background:#a2acc6"></i><i style="left:0.0px;top:14.4px;background:#7a849c"></i><i style="left:4.8px;top:14.4px;background:#9aa4bc"></i><i style="left:9.6px;top:14.4px;background:#6a748c"></i><i style="left:0.0px;top:19.2px;background:#4a5268"></i><i style="left:4.8px;top:19.2px;background:#5a6278"></i><i style="left:9.6px;top:19.2px;background:#454d62"></i></div><div class="mz" style="left:641.0px;top:282.3px"><i style="left:0.0px;top:0.0px;background:rgba(58,58,60,1.00)"></i><i style="left:9.6px;top:0.0px;background:rgba(88,88,90,1.00)"></i><i style="left:14.4px;top:0.0px;background:rgba(88,88,90,1.00)"></i><i style="left:19.2px;top:0.0px;background:rgba(98,98,100,1.00)"></i><i style="left:28.8px;top:0.0px;background:rgba(72,72,74,1.00)"></i><i style="left:38.4px;top:0.0px;background:rgba(98,98,100,1.00)"></i><i style="left:48.0px;top:0.0px;background:rgba(72,72,74,1.00)"></i><i style="left:52.8px;top:0.0px;background:rgba(72,72,74,1.00)"></i><i style="left:67.2px;top:0.0px;background:rgba(98,98,100,1.00)"></i><i style="left:0.0px;top:4.8px;background:rgba(82,82,84,1.00)"></i><i style="left:4.8px;top:4.8px;background:rgba(120,120,122,1.00)"></i><i style="left:9.6px;top:4.8px;background:rgba(120,120,122,1.00)"></i><i style="left:14.4px;top:4.8px;background:rgba(96,96,98,1.00)"></i><i style="left:19.2px;top:4.8px;background:rgba(82,82,84,1.00)"></i><i style="left:24.0px;top:4.8px;background:rgba(108,108,110,1.00)"></i><i style="left:28.8px;top:4.8px;background:rgba(132,132,134,1.00)"></i><i style="left:33.6px;top:4.8px;background:rgba(108,108,110,1.00)"></i><i style="left:38.4px;top:4.8px;background:rgba(82,82,84,1.00)"></i><i style="left:43.2px;top:4.8px;background:rgba(96,96,98,1.00)"></i><i style="left:48.0px;top:4.8px;background:rgba(96,96,98,1.00)"></i><i style="left:52.8px;top:4.8px;background:rgba(120,120,122,1.00)"></i><i style="left:57.6px;top:4.8px;background:rgba(132,132,134,1.00)"></i><i style="left:62.4px;top:4.8px;background:rgba(140,140,142,1.00)"></i><i style="left:67.2px;top:4.8px;background:rgba(132,132,134,1.00)"></i><i style="left:0.0px;top:9.6px;background:rgba(74,74,76,1.00)"></i><i style="left:4.8px;top:9.6px;background:rgba(74,74,76,1.00)"></i><i style="left:9.6px;top:9.6px;background:rgba(88,88,90,1.00)"></i><i style="left:14.4px;top:9.6px;background:rgba(88,88,90,1.00)"></i><i style="left:19.2px;top:9.6px;background:rgba(114,114,116,1.00)"></i><i style="left:24.0px;top:9.6px;background:rgba(102,102,104,1.00)"></i><i style="left:28.8px;top:9.6px;background:rgba(74,74,76,1.00)"></i><i style="left:33.6px;top:9.6px;background:rgba(126,126,128,1.00)"></i><i style="left:38.4px;top:9.6px;background:rgba(102,102,104,1.00)"></i><i style="left:43.2px;top:9.6px;background:rgba(102,102,104,1.00)"></i><i style="left:48.0px;top:9.6px;background:rgba(114,114,116,1.00)"></i><i style="left:52.8px;top:9.6px;background:rgba(74,74,76,1.00)"></i><i style="left:57.6px;top:9.6px;background:rgba(74,74,76,1.00)"></i><i style="left:62.4px;top:9.6px;background:rgba(74,74,76,1.00)"></i><i style="left:67.2px;top:9.6px;background:rgba(88,88,90,1.00)"></i></div><div class="mz" style="left:739.500px;top:282.3px"><i style="left:4.0px;top:0.0px;width:4.300px;height:4.800px;background:rgba(85,85,87,1.00)"></i><i style="left:8.0px;top:0.0px;width:4.300px;height:4.800px;background:rgba(138,138,140,1.00)"></i><i style="left:0.0px;top:4.8px;width:4.300px;height:4.800px;background:rgba(106,106,108,1.00)"></i><i style="left:4.0px;top:4.8px;width:4.300px;height:4.800px;background:rgba(154,154,156,1.00)"></i><i style="left:8.0px;top:4.8px;width:4.300px;height:4.800px;background:rgba(122,122,124,1.00)"></i><i style="left:0.0px;top:9.6px;width:4.300px;height:4.800px;background:rgba(74,74,76,1.00)"></i><i style="left:4.0px;top:9.6px;width:4.300px;height:4.800px;background:rgba(98,98,100,1.00)"></i></div>
<div class="mz" style="left:616.0px;top:311.4px"><i style="left:0.0px;top:0.0px;background:#1a6ac4"></i><i style="left:4.8px;top:0.0px;background:#2b90ea"></i><i style="left:9.6px;top:0.0px;background:#3a9af0"></i><i style="left:14.4px;top:0.0px;background:#1a6ac4"></i><i style="left:0.0px;top:4.8px;background:#2b90ea"></i><i style="left:4.8px;top:4.8px;background:#1c78d8"></i><i style="left:9.6px;top:4.8px;background:#2b90ea"></i><i style="left:14.4px;top:4.8px;background:#1c78d8"></i><i style="left:0.0px;top:9.6px;background:#1c78d8"></i><i style="left:4.8px;top:9.6px;background:#e4f2ff"></i><i style="left:9.6px;top:9.6px;background:#a8d4fa"></i><i style="left:14.4px;top:9.6px;background:#2b90ea"></i><i style="left:0.0px;top:14.4px;background:#14589c"></i><i style="left:4.8px;top:14.4px;background:#1a64b0"></i><i style="left:9.6px;top:14.4px;background:#14589c"></i><i style="left:14.4px;top:14.4px;background:#104a88"></i></div><div class="mz" style="left:641.0px;top:313.8px"><i style="left:4.8px;top:0.0px;background:rgba(88,88,90,1.00)"></i><i style="left:9.6px;top:0.0px;background:rgba(98,98,100,1.00)"></i><i style="left:14.4px;top:0.0px;background:rgba(98,98,100,1.00)"></i><i style="left:24.0px;top:0.0px;background:rgba(98,98,100,1.00)"></i><i style="left:28.8px;top:0.0px;background:rgba(72,72,74,1.00)"></i><i style="left:33.6px;top:0.0px;background:rgba(72,72,74,1.00)"></i><i style="left:43.2px;top:0.0px;background:rgba(72,72,74,1.00)"></i><i style="left:0.0px;top:4.8px;background:rgba(96,96,98,1.00)"></i><i style="left:4.8px;top:4.8px;background:rgba(140,140,142,1.00)"></i><i style="left:9.6px;top:4.8px;background:rgba(140,140,142,1.00)"></i><i style="left:14.4px;top:4.8px;background:rgba(132,132,134,1.00)"></i><i style="left:19.2px;top:4.8px;background:rgba(96,96,98,1.00)"></i><i style="left:24.0px;top:4.8px;background:rgba(140,140,142,1.00)"></i><i style="left:28.8px;top:4.8px;background:rgba(120,120,122,1.00)"></i><i style="left:33.6px;top:4.8px;background:rgba(120,120,122,1.00)"></i><i style="left:38.4px;top:4.8px;background:rgba(132,132,134,1.00)"></i><i style="left:43.2px;top:4.8px;background:rgba(82,82,84,1.00)"></i><i style="left:0.0px;top:9.6px;background:rgba(114,114,116,1.00)"></i><i style="left:4.8px;top:9.6px;background:rgba(74,74,76,1.00)"></i><i style="left:9.6px;top:9.6px;background:rgba(74,74,76,1.00)"></i><i style="left:14.4px;top:9.6px;background:rgba(74,74,76,1.00)"></i><i style="left:19.2px;top:9.6px;background:rgba(74,74,76,1.00)"></i><i style="left:24.0px;top:9.6px;background:rgba(126,126,128,1.00)"></i><i style="left:28.8px;top:9.6px;background:rgba(102,102,104,1.00)"></i><i style="left:33.6px;top:9.6px;background:rgba(88,88,90,1.00)"></i><i style="left:38.4px;top:9.6px;background:rgba(106,106,108,1.00)"></i><i style="left:43.2px;top:9.6px;background:rgba(106,106,108,1.00)"></i></div><div class="mz" style="left:739.500px;top:313.8px"><i style="left:4.0px;top:0.0px;width:4.300px;height:4.800px;background:rgba(85,85,87,1.00)"></i><i style="left:8.0px;top:0.0px;width:4.300px;height:4.800px;background:rgba(138,138,140,1.00)"></i><i style="left:0.0px;top:4.8px;width:4.300px;height:4.800px;background:rgba(106,106,108,1.00)"></i><i style="left:4.0px;top:4.8px;width:4.300px;height:4.800px;background:rgba(154,154,156,1.00)"></i><i style="left:8.0px;top:4.8px;width:4.300px;height:4.800px;background:rgba(122,122,124,1.00)"></i><i style="left:0.0px;top:9.6px;width:4.300px;height:4.800px;background:rgba(74,74,76,1.00)"></i><i style="left:4.0px;top:9.6px;width:4.300px;height:4.800px;background:rgba(98,98,100,1.00)"></i></div>
<div class="mz" style="left:616.0px;top:342.3px"><i style="left:0.0px;top:0.0px;background:#2cc0dc"></i><i style="left:4.8px;top:0.0px;background:#28b2d6"></i><i style="left:9.6px;top:0.0px;background:#24a6d0"></i><i style="left:14.4px;top:0.0px;background:#209aca"></i><i style="left:0.0px;top:4.8px;background:#28aed4"></i><i style="left:4.8px;top:4.8px;background:#22a0cc"></i><i style="left:9.6px;top:4.8px;background:#1e94c2"></i><i style="left:14.4px;top:4.8px;background:#1a88b8"></i><i style="left:0.0px;top:9.6px;background:#1a6c92"></i><i style="left:4.8px;top:9.6px;background:#1c7aa4"></i><i style="left:9.6px;top:9.6px;background:#1a6c92"></i><i style="left:14.4px;top:9.6px;background:#145a7c"></i></div><div class="mz" style="left:641.0px;top:342.3px"><i style="left:0.0px;top:0.0px;background:rgba(98,98,100,1.00)"></i><i style="left:14.4px;top:0.0px;background:rgba(72,72,74,1.00)"></i><i style="left:33.6px;top:0.0px;background:rgba(98,98,100,1.00)"></i><i style="left:0.0px;top:4.8px;background:rgba(132,132,134,1.00)"></i><i style="left:4.8px;top:4.8px;background:rgba(132,132,134,1.00)"></i><i style="left:9.6px;top:4.8px;background:rgba(82,82,84,1.00)"></i><i style="left:14.4px;top:4.8px;background:rgba(108,108,110,1.00)"></i><i style="left:24.0px;top:4.8px;background:rgba(96,96,98,1.00)"></i><i style="left:28.8px;top:4.8px;background:rgba(96,96,98,1.00)"></i><i style="left:33.6px;top:4.8px;background:rgba(140,140,142,1.00)"></i><i style="left:38.4px;top:4.8px;background:rgba(82,82,84,1.00)"></i><i style="left:0.0px;top:9.6px;background:rgba(74,74,76,1.00)"></i><i style="left:4.8px;top:9.6px;background:rgba(102,102,104,1.00)"></i><i style="left:9.6px;top:9.6px;background:rgba(114,114,116,1.00)"></i><i style="left:14.4px;top:9.6px;background:rgba(114,114,116,1.00)"></i><i style="left:24.0px;top:9.6px;background:rgba(88,88,90,1.00)"></i><i style="left:28.8px;top:9.6px;background:rgba(74,74,76,1.00)"></i><i style="left:33.6px;top:9.6px;background:rgba(74,74,76,1.00)"></i><i style="left:38.4px;top:9.6px;background:rgba(88,88,90,1.00)"></i></div><div class="mz" style="left:739.500px;top:342.3px"><i style="left:4.0px;top:0.0px;width:4.300px;height:4.800px;background:rgba(85,85,87,1.00)"></i><i style="left:8.0px;top:0.0px;width:4.300px;height:4.800px;background:rgba(138,138,140,1.00)"></i><i style="left:0.0px;top:4.8px;width:4.300px;height:4.800px;background:rgba(106,106,108,1.00)"></i><i style="left:4.0px;top:4.8px;width:4.300px;height:4.800px;background:rgba(154,154,156,1.00)"></i><i style="left:8.0px;top:4.8px;width:4.300px;height:4.800px;background:rgba(122,122,124,1.00)"></i><i style="left:0.0px;top:9.6px;width:4.300px;height:4.800px;background:rgba(74,74,76,1.00)"></i><i style="left:4.0px;top:9.6px;width:4.300px;height:4.800px;background:rgba(98,98,100,1.00)"></i></div>
<div class="mz" style="left:616.0px;top:370.4px"><i style="left:4.8px;top:0.0px;background:#1a7a58"></i><i style="left:9.6px;top:0.0px;background:#16684c"></i><i style="left:4.8px;top:4.8px;background:#22946c"></i><i style="left:9.6px;top:4.8px;background:#1c8260"></i><i style="left:4.8px;top:9.6px;background:#27a078"></i><i style="left:9.6px;top:9.6px;background:#1f8c68"></i><i style="left:0.0px;top:14.4px;background:#14604a"></i><i style="left:4.8px;top:14.4px;background:#1c7c5c"></i><i style="left:9.6px;top:14.4px;background:#18705a"></i><i style="left:14.4px;top:14.4px;background:#12543e"></i></div><div class="mz" style="left:641.0px;top:372.8px"><i style="left:0.0px;top:0.0px;background:rgba(72,72,74,1.00)"></i><i style="left:4.8px;top:0.0px;background:rgba(72,72,74,1.00)"></i><i style="left:33.6px;top:0.0px;background:rgba(58,58,60,1.00)"></i><i style="left:48.0px;top:0.0px;background:rgba(88,88,90,1.00)"></i><i style="left:57.6px;top:0.0px;background:rgba(58,58,60,1.00)"></i><i style="left:0.0px;top:4.8px;background:rgba(108,108,110,1.00)"></i><i style="left:4.8px;top:4.8px;background:rgba(96,96,98,1.00)"></i><i style="left:9.6px;top:4.8px;background:rgba(82,82,84,1.00)"></i><i style="left:14.4px;top:4.8px;background:rgba(82,82,84,1.00)"></i><i style="left:19.2px;top:4.8px;background:rgba(120,120,122,1.00)"></i><i style="left:24.0px;top:4.8px;background:rgba(132,132,134,1.00)"></i><i style="left:28.8px;top:4.8px;background:rgba(108,108,110,1.00)"></i><i style="left:33.6px;top:4.8px;background:rgba(140,140,142,1.00)"></i><i style="left:38.4px;top:4.8px;background:rgba(82,82,84,1.00)"></i><i style="left:43.2px;top:4.8px;background:rgba(140,140,142,1.00)"></i><i style="left:48.0px;top:4.8px;background:rgba(140,140,142,1.00)"></i><i style="left:52.8px;top:4.8px;background:rgba(140,140,142,1.00)"></i><i style="left:57.6px;top:4.8px;background:rgba(96,96,98,1.00)"></i><i style="left:62.4px;top:4.8px;background:rgba(108,108,110,1.00)"></i><i style="left:67.2px;top:4.8px;background:rgba(108,108,110,1.00)"></i><i style="left:0.0px;top:9.6px;background:rgba(74,74,76,1.00)"></i><i style="left:4.8px;top:9.6px;background:rgba(106,106,108,1.00)"></i><i style="left:9.6px;top:9.6px;background:rgba(114,114,116,1.00)"></i><i style="left:14.4px;top:9.6px;background:rgba(74,74,76,1.00)"></i><i style="left:19.2px;top:9.6px;background:rgba(114,114,116,1.00)"></i><i style="left:24.0px;top:9.6px;background:rgba(74,74,76,1.00)"></i><i style="left:28.8px;top:9.6px;background:rgba(114,114,116,1.00)"></i><i style="left:33.6px;top:9.6px;background:rgba(126,126,128,1.00)"></i><i style="left:38.4px;top:9.6px;background:rgba(74,74,76,1.00)"></i><i style="left:43.2px;top:9.6px;background:rgba(126,126,128,1.00)"></i><i style="left:48.0px;top:9.6px;background:rgba(106,106,108,1.00)"></i><i style="left:52.8px;top:9.6px;background:rgba(114,114,116,1.00)"></i><i style="left:57.6px;top:9.6px;background:rgba(114,114,116,1.00)"></i><i style="left:62.4px;top:9.6px;background:rgba(126,126,128,1.00)"></i><i style="left:67.2px;top:9.6px;background:rgba(74,74,76,1.00)"></i></div><div class="mz" style="left:739.500px;top:372.8px"><i style="left:4.0px;top:0.0px;width:4.300px;height:4.800px;background:rgba(85,85,87,1.00)"></i><i style="left:8.0px;top:0.0px;width:4.300px;height:4.800px;background:rgba(138,138,140,1.00)"></i><i style="left:0.0px;top:4.8px;width:4.300px;height:4.800px;background:rgba(106,106,108,1.00)"></i><i style="left:4.0px;top:4.8px;width:4.300px;height:4.800px;background:rgba(154,154,156,1.00)"></i><i style="left:8.0px;top:4.8px;width:4.300px;height:4.800px;background:rgba(122,122,124,1.00)"></i><i style="left:0.0px;top:9.6px;width:4.300px;height:4.800px;background:rgba(74,74,76,1.00)"></i><i style="left:4.0px;top:9.6px;width:4.300px;height:4.800px;background:rgba(98,98,100,1.00)"></i></div>
<div class="mz" style="left:616.0px;top:400.4px"><i style="left:0.0px;top:0.0px;background:#8a3c3c"></i><i style="left:4.8px;top:0.0px;background:#e07a64"></i><i style="left:9.6px;top:0.0px;background:#f09880"></i><i style="left:14.4px;top:0.0px;background:#a04c48"></i><i style="left:0.0px;top:4.8px;background:#e88470"></i><i style="left:4.8px;top:4.8px;background:#f8b4a4"></i><i style="left:9.6px;top:4.8px;background:#f4a090"></i><i style="left:14.4px;top:4.8px;background:#e07868"></i><i style="left:0.0px;top:9.6px;background:#d87060"></i><i style="left:4.8px;top:9.6px;background:#f0988a"></i><i style="left:9.6px;top:9.6px;background:#e88878"></i><i style="left:14.4px;top:9.6px;background:#c86458"></i><i style="left:0.0px;top:14.4px;background:#7a3438"></i><i style="left:4.8px;top:14.4px;background:#b85850"></i><i style="left:9.6px;top:14.4px;background:#a85048"></i><i style="left:14.4px;top:14.4px;background:#6a2c34"></i></div><div class="mz" style="left:641.0px;top:402.8px"><i style="left:4.8px;top:0.0px;background:rgba(58,58,60,1.00)"></i><i style="left:24.0px;top:0.0px;background:rgba(98,98,100,1.00)"></i><i style="left:28.8px;top:0.0px;background:rgba(58,58,60,1.00)"></i><i style="left:0.0px;top:4.8px;background:rgba(132,132,134,1.00)"></i><i style="left:4.8px;top:4.8px;background:rgba(82,82,84,1.00)"></i><i style="left:9.6px;top:4.8px;background:rgba(108,108,110,1.00)"></i><i style="left:14.4px;top:4.8px;background:rgba(132,132,134,1.00)"></i><i style="left:19.2px;top:4.8px;background:rgba(82,82,84,1.00)"></i><i style="left:24.0px;top:4.8px;background:rgba(120,120,122,1.00)"></i><i style="left:28.8px;top:4.8px;background:rgba(82,82,84,1.00)"></i><i style="left:33.6px;top:4.8px;background:rgba(96,96,98,1.00)"></i><i style="left:0.0px;top:9.6px;background:rgba(106,106,108,1.00)"></i><i style="left:4.8px;top:9.6px;background:rgba(74,74,76,1.00)"></i><i style="left:9.6px;top:9.6px;background:rgba(114,114,116,1.00)"></i><i style="left:14.4px;top:9.6px;background:rgba(126,126,128,1.00)"></i><i style="left:19.2px;top:9.6px;background:rgba(106,106,108,1.00)"></i><i style="left:24.0px;top:9.6px;background:rgba(114,114,116,1.00)"></i><i style="left:28.8px;top:9.6px;background:rgba(102,102,104,1.00)"></i><i style="left:33.6px;top:9.6px;background:rgba(74,74,76,1.00)"></i></div><div class="mz" style="left:739.500px;top:402.8px"><i style="left:4.0px;top:0.0px;width:4.300px;height:4.800px;background:rgba(85,85,87,1.00)"></i><i style="left:8.0px;top:0.0px;width:4.300px;height:4.800px;background:rgba(138,138,140,1.00)"></i><i style="left:0.0px;top:4.8px;width:4.300px;height:4.800px;background:rgba(106,106,108,1.00)"></i><i style="left:4.0px;top:4.8px;width:4.300px;height:4.800px;background:rgba(154,154,156,1.00)"></i><i style="left:8.0px;top:4.8px;width:4.300px;height:4.800px;background:rgba(122,122,124,1.00)"></i><i style="left:0.0px;top:9.6px;width:4.300px;height:4.800px;background:rgba(74,74,76,1.00)"></i><i style="left:4.0px;top:9.6px;width:4.300px;height:4.800px;background:rgba(98,98,100,1.00)"></i></div>
<div class="mz" style="left:616.0px;top:430.4px"><i style="left:0.0px;top:0.0px;background:#5a30a0"></i><i style="left:4.8px;top:0.0px;background:#8a50e0"></i><i style="left:9.6px;top:0.0px;background:#7a44d0"></i><i style="left:14.4px;top:0.0px;background:#502a90"></i><i style="left:0.0px;top:4.8px;background:#8448dc"></i><i style="left:4.8px;top:4.8px;background:#d8b0ff"></i><i style="left:9.6px;top:4.8px;background:#a468f0"></i><i style="left:14.4px;top:4.8px;background:#7a40d0"></i><i style="left:0.0px;top:9.6px;background:#7a40d0"></i><i style="left:4.8px;top:9.6px;background:#a060ec"></i><i style="left:9.6px;top:9.6px;background:#8a4ce0"></i><i style="left:14.4px;top:9.6px;background:#6a38c0"></i><i style="left:0.0px;top:14.4px;background:#3c2070"></i><i style="left:4.8px;top:14.4px;background:#5a30a0"></i><i style="left:9.6px;top:14.4px;background:#4c2888"></i><i style="left:14.4px;top:14.4px;background:#341a60"></i></div><div class="mz" style="left:641.0px;top:432.8px"><i style="left:0.0px;top:0.0px;background:rgba(72,72,74,1.00)"></i><i style="left:9.6px;top:0.0px;background:rgba(72,72,74,1.00)"></i><i style="left:19.2px;top:0.0px;background:rgba(98,98,100,1.00)"></i><i style="left:28.8px;top:0.0px;background:rgba(98,98,100,1.00)"></i><i style="left:38.4px;top:0.0px;background:rgba(98,98,100,1.00)"></i><i style="left:0.0px;top:4.8px;background:rgba(96,96,98,1.00)"></i><i style="left:4.8px;top:4.8px;background:rgba(96,96,98,1.00)"></i><i style="left:9.6px;top:4.8px;background:rgba(120,120,122,1.00)"></i><i style="left:14.4px;top:4.8px;background:rgba(96,96,98,1.00)"></i><i style="left:19.2px;top:4.8px;background:rgba(132,132,134,1.00)"></i><i style="left:24.0px;top:4.8px;background:rgba(108,108,110,1.00)"></i><i style="left:28.8px;top:4.8px;background:rgba(96,96,98,1.00)"></i><i style="left:33.6px;top:4.8px;background:rgba(96,96,98,1.00)"></i><i style="left:38.4px;top:4.8px;background:rgba(96,96,98,1.00)"></i><i style="left:43.2px;top:4.8px;background:rgba(120,120,122,1.00)"></i><i style="left:0.0px;top:9.6px;background:rgba(102,102,104,1.00)"></i><i style="left:4.8px;top:9.6px;background:rgba(74,74,76,1.00)"></i><i style="left:9.6px;top:9.6px;background:rgba(106,106,108,1.00)"></i><i style="left:14.4px;top:9.6px;background:rgba(74,74,76,1.00)"></i><i style="left:19.2px;top:9.6px;background:rgba(102,102,104,1.00)"></i><i style="left:24.0px;top:9.6px;background:rgba(88,88,90,1.00)"></i><i style="left:28.8px;top:9.6px;background:rgba(74,74,76,1.00)"></i><i style="left:33.6px;top:9.6px;background:rgba(114,114,116,1.00)"></i><i style="left:38.4px;top:9.6px;background:rgba(114,114,116,1.00)"></i><i style="left:43.2px;top:9.6px;background:rgba(102,102,104,1.00)"></i></div><div class="mz" style="left:739.500px;top:432.8px"><i style="left:4.0px;top:0.0px;width:4.300px;height:4.800px;background:rgba(85,85,87,1.00)"></i><i style="left:8.0px;top:0.0px;width:4.300px;height:4.800px;background:rgba(138,138,140,1.00)"></i><i style="left:0.0px;top:4.8px;width:4.300px;height:4.800px;background:rgba(106,106,108,1.00)"></i><i style="left:4.0px;top:4.8px;width:4.300px;height:4.800px;background:rgba(154,154,156,1.00)"></i><i style="left:8.0px;top:4.8px;width:4.300px;height:4.800px;background:rgba(122,122,124,1.00)"></i><i style="left:0.0px;top:9.6px;width:4.300px;height:4.800px;background:rgba(74,74,76,1.00)"></i><i style="left:4.0px;top:9.6px;width:4.300px;height:4.800px;background:rgba(98,98,100,1.00)"></i></div>
<div class="mz" style="left:616.0px;top:462.8px"><i style="left:0.0px;top:0.0px;background:#d09818"></i><i style="left:4.8px;top:0.0px;background:#e4b030"></i><i style="left:9.6px;top:0.0px;background:#c89014"></i><i style="left:14.4px;top:0.0px;background:#b88010"></i><i style="left:0.0px;top:4.8px;background:#f8d868"></i><i style="left:4.8px;top:4.8px;background:#ffe484"></i><i style="left:9.6px;top:4.8px;background:#fcd870"></i><i style="left:14.4px;top:4.8px;background:#f0c850"></i><i style="left:0.0px;top:9.6px;background:#f4cc54"></i><i style="left:4.8px;top:9.6px;background:#fcd868"></i><i style="left:9.6px;top:9.6px;background:#f8d060"></i><i style="left:14.4px;top:9.6px;background:#ecc044"></i></div><div class="mz" style="left:641.0px;top:462.8px"><i style="left:9.6px;top:0.0px;background:rgba(98,98,100,1.00)"></i><i style="left:33.6px;top:0.0px;background:rgba(58,58,60,1.00)"></i><i style="left:38.4px;top:0.0px;background:rgba(58,58,60,1.00)"></i><i style="left:48.0px;top:0.0px;background:rgba(88,88,90,1.00)"></i><i style="left:0.0px;top:4.8px;background:rgba(108,108,110,1.00)"></i><i style="left:4.8px;top:4.8px;background:rgba(140,140,142,1.00)"></i><i style="left:9.6px;top:4.8px;background:rgba(132,132,134,1.00)"></i><i style="left:14.4px;top:4.8px;background:rgba(82,82,84,1.00)"></i><i style="left:19.2px;top:4.8px;background:rgba(140,140,142,1.00)"></i><i style="left:24.0px;top:4.8px;background:rgba(96,96,98,1.00)"></i><i style="left:28.8px;top:4.8px;background:rgba(120,120,122,1.00)"></i><i style="left:33.6px;top:4.8px;background:rgba(120,120,122,1.00)"></i><i style="left:38.4px;top:4.8px;background:rgba(96,96,98,1.00)"></i><i style="left:43.2px;top:4.8px;background:rgba(82,82,84,1.00)"></i><i style="left:48.0px;top:4.8px;background:rgba(108,108,110,1.00)"></i><i style="left:0.0px;top:9.6px;background:rgba(88,88,90,1.00)"></i><i style="left:4.8px;top:9.6px;background:rgba(88,88,90,1.00)"></i><i style="left:9.6px;top:9.6px;background:rgba(74,74,76,1.00)"></i><i style="left:14.4px;top:9.6px;background:rgba(106,106,108,1.00)"></i><i style="left:19.2px;top:9.6px;background:rgba(74,74,76,1.00)"></i><i style="left:24.0px;top:9.6px;background:rgba(114,114,116,1.00)"></i><i style="left:28.8px;top:9.6px;background:rgba(74,74,76,1.00)"></i><i style="left:33.6px;top:9.6px;background:rgba(106,106,108,1.00)"></i><i style="left:38.4px;top:9.6px;background:rgba(126,126,128,1.00)"></i><i style="left:43.2px;top:9.6px;background:rgba(106,106,108,1.00)"></i><i style="left:48.0px;top:9.6px;background:rgba(106,106,108,1.00)"></i></div>
<div class="mz" style="left:616.0px;top:492.8px"><i style="left:0.0px;top:0.0px;background:#d09818"></i><i style="left:4.8px;top:0.0px;background:#e4b030"></i><i style="left:9.6px;top:0.0px;background:#c89014"></i><i style="left:14.4px;top:0.0px;background:#b88010"></i><i style="left:0.0px;top:4.8px;background:#f8d868"></i><i style="left:4.8px;top:4.8px;background:#ffe484"></i><i style="left:9.6px;top:4.8px;background:#fcd870"></i><i style="left:14.4px;top:4.8px;background:#f0c850"></i><i style="left:0.0px;top:9.6px;background:#f4cc54"></i><i style="left:4.8px;top:9.6px;background:#fcd868"></i><i style="left:9.6px;top:9.6px;background:#f8d060"></i><i style="left:14.4px;top:9.6px;background:#ecc044"></i></div><div class="mz" style="left:641.0px;top:492.8px"><i style="left:14.4px;top:0.0px;background:rgba(98,98,100,1.00)"></i><i style="left:19.2px;top:0.0px;background:rgba(58,58,60,1.00)"></i><i style="left:38.4px;top:0.0px;background:rgba(72,72,74,1.00)"></i><i style="left:43.2px;top:0.0px;background:rgba(88,88,90,1.00)"></i><i style="left:0.0px;top:4.8px;background:rgba(132,132,134,1.00)"></i><i style="left:4.8px;top:4.8px;background:rgba(132,132,134,1.00)"></i><i style="left:9.6px;top:4.8px;background:rgba(132,132,134,1.00)"></i><i style="left:14.4px;top:4.8px;background:rgba(96,96,98,1.00)"></i><i style="left:19.2px;top:4.8px;background:rgba(120,120,122,1.00)"></i><i style="left:24.0px;top:4.8px;background:rgba(140,140,142,1.00)"></i><i style="left:33.6px;top:4.8px;background:rgba(96,96,98,1.00)"></i><i style="left:38.4px;top:4.8px;background:rgba(82,82,84,1.00)"></i><i style="left:43.2px;top:4.8px;background:rgba(120,120,122,1.00)"></i><i style="left:48.0px;top:4.8px;background:rgba(140,140,142,1.00)"></i><i style="left:0.0px;top:9.6px;background:rgba(114,114,116,1.00)"></i><i style="left:4.8px;top:9.6px;background:rgba(88,88,90,1.00)"></i><i style="left:9.6px;top:9.6px;background:rgba(114,114,116,1.00)"></i><i style="left:14.4px;top:9.6px;background:rgba(114,114,116,1.00)"></i><i style="left:19.2px;top:9.6px;background:rgba(88,88,90,1.00)"></i><i style="left:24.0px;top:9.6px;background:rgba(106,106,108,1.00)"></i><i style="left:33.6px;top:9.6px;background:rgba(74,74,76,1.00)"></i><i style="left:38.4px;top:9.6px;background:rgba(114,114,116,1.00)"></i><i style="left:43.2px;top:9.6px;background:rgba(126,126,128,1.00)"></i><i style="left:48.0px;top:9.6px;background:rgba(126,126,128,1.00)"></i></div>
<div class="mz" style="left:616.0px;top:524.2px"><i style="left:0.0px;top:0.0px;background:#a87c14"></i><i style="left:4.8px;top:0.0px;background:#b88c20"></i><i style="left:9.6px;top:0.0px;background:#a07410"></i><i style="left:14.4px;top:0.0px;background:#906808"></i><i style="left:0.0px;top:4.8px;background:#c4a038"></i><i style="left:4.8px;top:4.8px;background:#ccaa48"></i><i style="left:9.6px;top:4.8px;background:#c4a038"></i><i style="left:14.4px;top:4.8px;background:#b89430"></i></div><div class="mz" style="left:641.0px;top:521.8px"><i style="left:14.4px;top:0.0px;background:rgba(88,88,90,1.00)"></i><i style="left:24.0px;top:0.0px;background:rgba(58,58,60,1.00)"></i><i style="left:28.8px;top:0.0px;background:rgba(98,98,100,1.00)"></i><i style="left:52.8px;top:0.0px;background:rgba(58,58,60,1.00)"></i><i style="left:57.6px;top:0.0px;background:rgba(58,58,60,1.00)"></i><i style="left:62.4px;top:0.0px;background:rgba(88,88,90,1.00)"></i><i style="left:0.0px;top:4.8px;background:rgba(132,132,134,1.00)"></i><i style="left:4.8px;top:4.8px;background:rgba(120,120,122,1.00)"></i><i style="left:9.6px;top:4.8px;background:rgba(108,108,110,1.00)"></i><i style="left:14.4px;top:4.8px;background:rgba(120,120,122,1.00)"></i><i style="left:19.2px;top:4.8px;background:rgba(82,82,84,1.00)"></i><i style="left:24.0px;top:4.8px;background:rgba(96,96,98,1.00)"></i><i style="left:28.8px;top:4.8px;background:rgba(82,82,84,1.00)"></i><i style="left:33.6px;top:4.8px;background:rgba(120,120,122,1.00)"></i><i style="left:38.4px;top:4.8px;background:rgba(82,82,84,1.00)"></i><i style="left:43.2px;top:4.8px;background:rgba(96,96,98,1.00)"></i><i style="left:48.0px;top:4.8px;background:rgba(132,132,134,1.00)"></i><i style="left:52.8px;top:4.8px;background:rgba(108,108,110,1.00)"></i><i style="left:57.6px;top:4.8px;background:rgba(140,140,142,1.00)"></i><i style="left:62.4px;top:4.8px;background:rgba(96,96,98,1.00)"></i><i style="left:0.0px;top:9.6px;background:rgba(114,114,116,1.00)"></i><i style="left:4.8px;top:9.6px;background:rgba(88,88,90,1.00)"></i><i style="left:9.6px;top:9.6px;background:rgba(126,126,128,1.00)"></i><i style="left:14.4px;top:9.6px;background:rgba(106,106,108,1.00)"></i><i style="left:19.2px;top:9.6px;background:rgba(126,126,128,1.00)"></i><i style="left:24.0px;top:9.6px;background:rgba(106,106,108,1.00)"></i><i style="left:28.8px;top:9.6px;background:rgba(106,106,108,1.00)"></i><i style="left:33.6px;top:9.6px;background:rgba(114,114,116,1.00)"></i><i style="left:38.4px;top:9.6px;background:rgba(114,114,116,1.00)"></i><i style="left:43.2px;top:9.6px;background:rgba(126,126,128,1.00)"></i><i style="left:48.0px;top:9.6px;background:rgba(106,106,108,1.00)"></i><i style="left:52.8px;top:9.6px;background:rgba(74,74,76,1.00)"></i><i style="left:57.6px;top:9.6px;background:rgba(88,88,90,1.00)"></i><i style="left:62.4px;top:9.6px;background:rgba(114,114,116,1.00)"></i></div>
</div>
<div class="abs" style="left:765px;top:221.500px;width:3px;height:152px;background:#9a9a9a;border-radius:1.500px"></div>
<div class="abs" style="left:778.500px;top:185px;width:1.500px;height:343px;background:#2b2b2b"></div>

<!-- file list -->
<div class="d" style="left:803px;top:194px;color:#e6e6e6;letter-spacing:0">Name</div>
<div class="colsep" style="left:1121.500px"></div>
<div class="colsep" style="left:1301px"></div>
<div class="colsep" style="left:1451px"></div>
<svg class="abs" style="left:1207px;top:186px" width="10" height="5" viewBox="0 0 10 5" fill="none" stroke="#c8c8c8" stroke-width=".9"><path d="M.5.400L5 4.400 9.500.4"/></svg>
<div class="d" style="left:1129.500px;top:194px;color:#e6e6e6;letter-spacing:.25px">Date modified</div>
<div class="d" style="left:1309.500px;top:194px;color:#e6e6e6;letter-spacing:-.65px">Type</div>
<div class="d" style="left:1459px;top:194px;color:#e6e6e6;letter-spacing:-.67px">Size</div>
<svg class="abs" style="left:791px;top:236px" width="11" height="7" viewBox="0 0 11 7" fill="none" stroke="#b8b8b8" stroke-width="1"><path d="M.5.600l5 5.200 5-5.200"/></svg>
<div class="d" style="left:808.500px;top:231px;letter-spacing:-.1px">Today</div>
<div class="abs" style="left:800px;top:255px;width:724px;height:28px;background:#4f4f4f;border:1px solid #c4c4c4;border-right:0"></div>
<svg class="abs" style="left:807.500px;top:258.7px" width="15" height="19" viewBox="0 0 15 19"><path d="M.5.400h8.800L14.500 5.600V18.600H.5z" fill="#fdfdfd" stroke="#cfcfcf" stroke-width=".5"/><path d="M9.300.4V5.600H14.500z" fill="#d9d9d9"/><rect x="3.200" y="6.600" width="8.200" height="8.400" rx="1.300" fill="#2a7fd8"/><path d="M3.600 14.300l3.100-3.700 2 2.100 1.100-1 1.600 1.800v.3c0 .7-.5 1.200-1.200 1.200H4.500c-.5 0-.8-.3-.9-.7z" fill="#52b8f6"/><circle cx="8.900" cy="8.700" r=".8" fill="#e4f4ff"/></svg><div class="frow" style="top:261.7px">t_Suzanne_D</div><div class="fdate" style="top:261.7px">1/21/2026 3:41 PM</div><div class="ftype" style="top:261.7px">JPG File</div><div class="fsize" style="top:261.7px">219</div><svg class="abs" style="left:807.500px;top:285.7px" width="15" height="19" viewBox="0 0 15 19"><path d="M.5.400h8.800L14.500 5.600V18.600H.5z" fill="#fdfdfd" stroke="#cfcfcf" stroke-width=".5"/><path d="M9.300.4V5.600H14.500z" fill="#d9d9d9"/><rect x="3.200" y="6.600" width="8.200" height="8.400" rx="1.300" fill="#2a7fd8"/><path d="M3.600 14.300l3.100-3.700 2 2.100 1.100-1 1.600 1.800v.3c0 .7-.5 1.200-1.200 1.200H4.500c-.5 0-.8-.3-.9-.7z" fill="#52b8f6"/><circle cx="8.900" cy="8.700" r=".8" fill="#e4f4ff"/></svg><div class="frow" style="top:288.7px">t_Suzanne_M</div><div class="fdate" style="top:288.7px">1/21/2026 3:41 PM</div><div class="ftype" style="top:288.7px">JPG File</div><div class="fsize" style="top:288.7px">119</div><svg class="abs" style="left:807.500px;top:312.7px" width="15" height="19" viewBox="0 0 15 19"><path d="M.5.400h8.800L14.500 5.600V18.600H.5z" fill="#fdfdfd" stroke="#cfcfcf" stroke-width=".5"/><path d="M9.300.4V5.600H14.500z" fill="#d9d9d9"/><rect x="3.200" y="6.600" width="8.200" height="8.400" rx="1.300" fill="#2a7fd8"/><path d="M3.600 14.300l3.100-3.700 2 2.100 1.100-1 1.600 1.800v.3c0 .7-.5 1.200-1.200 1.200H4.500c-.5 0-.8-.3-.9-.7z" fill="#52b8f6"/><circle cx="8.900" cy="8.700" r=".8" fill="#e4f4ff"/></svg><div class="frow" style="top:315.7px">t_Suzanne_N</div><div class="fdate" style="top:315.7px">1/21/2026 3:41 PM</div><div class="ftype" style="top:315.7px">JPG File</div><div class="fsize" style="top:315.7px">421</div><svg class="abs" style="left:807.500px;top:339.7px" width="15" height="19" viewBox="0 0 15 19"><path d="M.5.400h8.800L14.500 5.600V18.600H.5z" fill="#fdfdfd" stroke="#cfcfcf" stroke-width=".5"/><path d="M9.300.4V5.600H14.500z" fill="#d9d9d9"/><rect x="3.200" y="6.600" width="8.200" height="8.400" rx="1.300" fill="#2a7fd8"/><path d="M3.600 14.300l3.100-3.700 2 2.100 1.100-1 1.600 1.800v.3c0 .7-.5 1.200-1.200 1.200H4.500c-.5 0-.8-.3-.9-.7z" fill="#52b8f6"/><circle cx="8.900" cy="8.700" r=".8" fill="#e4f4ff"/></svg><div class="frow" style="top:342.7px">t_Suzanne_R</div><div class="fdate" style="top:342.7px">1/21/2026 3:41 PM</div><div class="ftype" style="top:342.7px">JPG File</div><div class="fsize" style="top:342.7px">88</div>
<div class="abs" style="left:803px;top:516px;width:663px;height:3.200px;background:#a6a6a6;border-radius:1.600px"></div>

<!-- bottom bar -->
<div class="d" style="left:730px;top:550.500px;letter-spacing:-.33px">File name:</div>
<div class="abs" style="left:803px;top:544px;width:450px;height:28.500px;border:1px solid #8f8f8f;background:#383838"></div>
<div class="d" style="left:807.500px;top:550.500px;letter-spacing:-.7px">t_Suzanne_D</div>
<svg class="abs" style="left:1237px;top:555px" width="10" height="6" viewBox="0 0 10 6" fill="none" stroke="#d0d0d0" stroke-width="1"><path d="M.5.500L5 5l4.500-4.500"/></svg>
<div class="abs" style="left:1268px;top:544px;width:235px;height:28.500px;border:1px solid #8f8f8f;background:#383838"></div>
<div class="d" style="left:1272px;top:550.500px;letter-spacing:-.4px">Custom Files</div>
<svg class="abs" style="left:1487px;top:555px" width="10" height="6" viewBox="0 0 10 6" fill="none" stroke="#d0d0d0" stroke-width="1"><path d="M.5.500L5 5l4.500-4.500"/></svg>
<div class="abs" style="left:1269px;top:581px;width:108px;height:31px;border:1px solid #9b9b9b;border-radius:4.500px;background:#474747"></div>
<div class="d" style="left:1305px;top:588.500px;letter-spacing:-.2px">Open</div>
<div class="abs" style="left:1394px;top:581px;width:108px;height:31px;border:1px solid #9b9b9b;border-radius:4.500px;background:#323232"></div>
<div class="d" style="left:1426px;top:588.500px;letter-spacing:-.53px">Cancel</div>
<svg class="abs" style="left:1510px;top:621px" width="12" height="12" viewBox="0 0 12 12" fill="#e4e4e4"><rect x="8.500" y=".3" width="2.600" height="2.600"/><rect x="4.500" y="4.300" width="2.600" height="2.600"/><rect x="8.500" y="4.300" width="2.600" height="2.600"/><rect x=".5" y="8.300" width="2.600" height="2.600"/><rect x="4.500" y="8.300" width="2.600" height="2.600"/><rect x="8.500" y="8.300" width="2.600" height="2.600"/></svg>
<!-- mouse cursor -->
<svg class="abs" style="left:1340.500px;top:600px" width="14" height="21" viewBox="0 0 14 21"><path d="M1 1v16l3.700-3.500 2.700 6 2.300-1-2.700-5.900H12z" fill="#fff" stroke="#000" stroke-width="1.100" stroke-linejoin="round"/></svg>
</div>
</body>
</html>
